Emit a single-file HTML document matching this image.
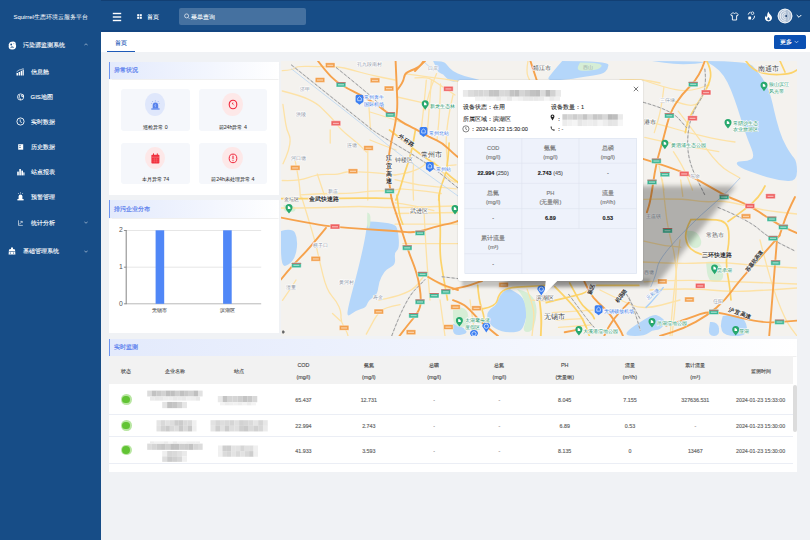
<!DOCTYPE html>
<html><head><meta charset="utf-8">
<style>
*{box-sizing:border-box;margin:0;padding:0}
html,body{width:810px;height:540px;overflow:hidden;background:#f0f2f5;font-family:"Liberation Sans",sans-serif;color:#333}
.abs{position:absolute}
div{-webkit-text-stroke-width:0.15px}
#side{position:absolute;left:0;top:0;width:101px;height:540px;background:#174d87}
#head{position:absolute;left:101px;top:0;width:709px;height:31.5px;background:#174d87}
.mi{position:absolute;color:#fff;font-size:5.9px;line-height:8px;white-space:nowrap;-webkit-text-stroke:0.12px #fff}
.ic{position:absolute}
#tabs{position:absolute;left:101px;top:31.5px;width:709px;height:20.5px;background:#fff}
.panel{position:absolute;background:#fff}
.ph{position:absolute;left:0;top:0;right:0;height:17.5px;background:linear-gradient(90deg,#e3eafc,#f3f6fe 60%,#ffffff);border-left:1.5px solid #6e95f2;box-shadow:0 0.5px 1px rgba(0,0,0,0.06)}
.ph span{position:absolute;left:4px;top:0;line-height:17.5px;font-size:5.5px;color:#5b80ee;white-space:nowrap;-webkit-text-stroke-width:0.2px}
.card{position:absolute;background:#f5f7fb;border-radius:3px}
.cl{position:absolute;left:0;right:0;text-align:center;font-size:5.3px;color:#333;white-space:nowrap;-webkit-text-stroke-width:0.05px}
.circ{position:absolute;width:22px;height:22px;border-radius:50%}
.th{position:absolute;width:60px;text-align:center;font-size:5.4px;line-height:8px;color:#484848;-webkit-text-stroke-width:0.12px;white-space:nowrap}
.td{position:absolute;width:60px;text-align:center;font-size:5.3px;line-height:8px;color:#666;white-space:nowrap}
</style></head>
<body>
<!-- sidebar -->
<div id="side">
  <div class="mi" style="left:13.5px;top:12.7px;-webkit-text-stroke-width:0.02px">Squirrel生态环境云服务平台</div>
  <div class="mi" style="left:23px;top:40.8px;">污染源监测系统</div>
  <div class="mi" style="left:31px;top:67.7px;">信息舱</div>
  <div class="mi" style="left:30.6px;top:92.7px;">GIS地图</div>
  <div class="mi" style="left:30.6px;top:117.7px;">实时数据</div>
  <div class="mi" style="left:30.6px;top:142.9px;">历史数据</div>
  <div class="mi" style="left:30.6px;top:167.5px;">站点报表</div>
  <div class="mi" style="left:30.6px;top:192.9px;">预警管理</div>
  <div class="mi" style="left:30.6px;top:218.8px;">统计分析</div>
  <div class="mi" style="left:23px;top:247.3px;">基础管理系统</div>
  <svg class="ic" style="left:7.5px;top:40.6px" width="9" height="9" viewBox="0 0 9 9"><path d="M1.2 2.6 Q1.6 0.6 3.8 0.8 Q5 0.2 6.4 0.8 Q8.2 1.6 7.8 3.6 Q8.6 5.2 7.8 6.8 Q7 8.6 4.6 8.4 Q2.2 8.6 1.2 7.4 Q0.3 6 0.8 4.4 Q0.4 3.4 1.2 2.6 Z" fill="#fff"/><ellipse cx="3.2" cy="3.4" rx="0.9" ry="1" fill="#174d87"/><path d="M2.6 6.6 Q3.8 5.2 5.6 6.4" fill="none" stroke="#174d87" stroke-width="1"/><circle cx="5.8" cy="2.6" r="0.55" fill="#8fa9cc"/></svg>
  <svg class="ic" style="left:84px;top:42.5px" width="4" height="3" viewBox="0 0 4 3"><path d="M0.3 2.4 L2 0.7 L3.7 2.4" fill="none" stroke="#fff" stroke-width="0.5"/></svg>
  <svg class="ic" style="left:16px;top:67.5px" width="8" height="8" viewBox="0 0 8 8"><rect x="0.5" y="5" width="1.5" height="2.5" fill="#fff"/><rect x="2.6" y="4" width="1.5" height="3.5" fill="#fff"/><rect x="4.7" y="2.8" width="1.5" height="4.7" fill="#fff"/><rect x="6.6" y="1.5" width="1.2" height="6" fill="#fff"/><path d="M0.5 4 L3 2 L5 1.6 L7.6 0.4" fill="none" stroke="#fff" stroke-width="0.6"/></svg>
  <svg class="ic" style="left:16.5px;top:92.8px" width="8" height="8" viewBox="0 0 8 8"><circle cx="3.6" cy="4" r="3.1" fill="none" stroke="#fff" stroke-width="0.8"/><path d="M2 1.8 Q3 2.6 2.4 3.6 Q1.6 4.2 2.6 5 Q3.6 5.6 3.4 7" fill="none" stroke="#fff" stroke-width="0.9"/><circle cx="5.6" cy="2.8" r="1.4" fill="#fff"/><circle cx="5.6" cy="2.8" r="0.5" fill="#174d87"/></svg>
  <svg class="ic" style="left:15.8px;top:117.2px" width="9" height="9" viewBox="0 0 9 9"><circle cx="4.5" cy="4.5" r="3.6" fill="none" stroke="#fff" stroke-width="0.9"/><path d="M4.2 2.4 L4.2 4.7 L5.8 5.6" fill="none" stroke="#fff" stroke-width="0.8"/></svg>
  <svg class="ic" style="left:17.5px;top:143.8px" width="6" height="6" viewBox="0 0 6 6"><rect x="0.2" y="0.2" width="5" height="5.5" fill="#fff"/><rect x="1.2" y="1.4" width="1.6" height="0.7" fill="#174d87"/><rect x="1.2" y="3.2" width="1.6" height="0.7" fill="#174d87"/></svg>
  <svg class="ic" style="left:16.8px;top:168px" width="8" height="8" viewBox="0 0 8 8"><rect x="0.2" y="3.6" width="1.6" height="3.8" fill="#fff"/><rect x="2.3" y="1" width="1.6" height="6.4" fill="#fff"/><rect x="4.4" y="2.6" width="1.6" height="4.8" fill="#fff"/><rect x="6.3" y="4.4" width="1.2" height="3" fill="#fff"/></svg>
  <svg class="ic" style="left:17px;top:192.4px" width="7" height="9" viewBox="0 0 7 9"><path d="M1.6 7 L1.6 4.6 Q1.6 2.6 3.5 2.6 Q5.4 2.6 5.4 4.6 L5.4 7 Z" fill="#fff"/><rect x="0.4" y="7" width="6.2" height="1.4" fill="#fff"/><path d="M3.5 0.3 L3.5 1.5 M1 1 L1.8 1.9 M6 1 L5.2 1.9" stroke="#fff" stroke-width="0.6"/></svg>
  <svg class="ic" style="left:18px;top:220.3px" width="5" height="6" viewBox="0 0 5 6"><path d="M0.5 0.3 L0.5 5.4 L4.8 5.4" fill="none" stroke="#fff" stroke-width="0.6"/><path d="M1.2 4.4 L4.2 1.4 M2.4 1.4 L4.2 1.4 L4.2 3" fill="none" stroke="#fff" stroke-width="0.6"/></svg>
  <svg class="ic" style="left:84.2px;top:221.3px" width="4" height="3" viewBox="0 0 4 3"><path d="M0.3 0.6 L2 2.3 L3.7 0.6" fill="none" stroke="#fff" stroke-width="0.5"/></svg>
  <svg class="ic" style="left:7.7px;top:247.4px" width="8" height="8" viewBox="0 0 8 8"><path d="M3 0.5 L5 0.5 L5 2 L7 2.6 L7.4 7.5 L0.6 7.5 L1 2.6 L3 2 Z" fill="#fff"/><path d="M1.2 4.5 L6.8 4.5" stroke="#174d87" stroke-width="0.6"/><circle cx="2.4" cy="6" r="0.6" fill="#174d87"/><circle cx="5.6" cy="6" r="0.6" fill="#174d87"/></svg>
  <svg class="ic" style="left:84.2px;top:249.8px" width="4" height="3" viewBox="0 0 4 3"><path d="M0.3 0.6 L2 2.3 L3.7 0.6" fill="none" stroke="#fff" stroke-width="0.5"/></svg>
</div>
<!-- header -->
<div id="head">
  <div class="abs" style="left:0;top:0;width:709px;height:1px;background:#123f73"></div>
  <div class="abs" style="left:0;top:29.5px;width:709px;height:2px;background:#134581"></div>
  <svg class="abs" style="left:10.7px;top:11.5px" width="10" height="10" viewBox="0 0 10 10"><rect x="0.8" y="0.8" width="8.4" height="1.4" fill="#fff"/><rect x="0.8" y="4.3" width="8.4" height="1.4" fill="#fff"/><rect x="0.8" y="7.8" width="8.4" height="1.4" fill="#fff"/></svg>
  <svg class="abs" style="left:36.3px;top:14px" width="5" height="5" viewBox="0 0 5 5"><rect x="0.2" y="0.2" width="2" height="2" fill="#fff"/><rect x="2.8" y="0.2" width="2" height="2" fill="#fff"/><rect x="0.2" y="2.8" width="2" height="2" fill="#fff"/><rect x="2.8" y="2.8" width="2" height="2" fill="#fff"/></svg>
  <div class="mi" style="left:45.5px;top:12.5px;">首页</div>
  <div class="abs" style="left:78.3px;top:7.8px;width:126.8px;height:17px;background:#4571a0;border-radius:2px"></div>
  <svg class="abs" style="left:83.3px;top:13px" width="6" height="7" viewBox="0 0 6 7"><circle cx="2.6" cy="2.9" r="2" fill="none" stroke="#dfe6f0" stroke-width="0.8"/><line x1="4" y1="4.4" x2="5.4" y2="5.8" stroke="#dfe6f0" stroke-width="0.8"/></svg>
  <div class="mi" style="left:90px;top:12.5px;color:#d9e1ec;font-size:5.6px">菜单查询</div>
  <svg class="abs" style="left:629px;top:12px" width="9" height="9" viewBox="0 0 9 9"><path d="M2.6 1 L3.6 1 Q4.5 2 5.4 1 L6.4 1 L8.3 2.6 L7.2 4 L6.6 3.6 L6.6 8 L2.4 8 L2.4 3.6 L1.8 4 L0.7 2.6 Z" fill="none" stroke="#fff" stroke-width="0.9" stroke-linejoin="round"/></svg>
  <svg class="abs" style="left:645.5px;top:10.8px" width="9" height="10" viewBox="0 0 9 10"><circle cx="5.5" cy="2.2" r="1.3" fill="none" stroke="#fff" stroke-width="0.8"/><rect x="1.3" y="5.6" width="2.8" height="2.8" fill="#fff" rx="0.4"/><path d="M1.2 3.6 Q1.8 1.4 3.6 1.2" fill="none" stroke="#fff" stroke-width="0.9"/><path d="M7.6 4.8 Q7.6 7.8 5.4 8.6" fill="none" stroke="#fff" stroke-width="0.9"/></svg>
  <svg class="abs" style="left:662.5px;top:10.5px" width="9" height="11" viewBox="0 0 9 11"><path d="M4.3 0.5 Q5 2.6 6.9 4.2 Q8.5 5.8 7.9 8 Q7 10.4 4.5 10.5 Q1.8 10.4 1 8 Q0.5 6 2 4.4 Q2.3 6 3 6.4 Q2.8 3 4.3 0.5 Z M4.5 6 Q3.2 7.4 3.3 8.3 Q3.5 9.3 4.5 9.3 Q5.6 9.3 5.8 8.3 Q5.9 7.2 4.5 6 Z" fill="#fff" fill-rule="evenodd"/></svg>
  <svg class="abs" style="left:675.5px;top:8px" width="16" height="16" viewBox="0 0 16 16"><circle cx="8" cy="8" r="7.3" fill="#aebfd4"/><circle cx="8" cy="8" r="6.9" fill="none" stroke="#fff" stroke-width="0.9"/><path d="M8.6 2.6 Q3.2 3.2 3.2 8 Q3.2 12.8 8.6 13.4" fill="none" stroke="#fff" stroke-width="0.8"/><path d="M8.8 4.2 Q5 4.8 5 8 Q5 11.2 8.8 11.8" fill="none" stroke="#fff" stroke-width="0.7"/><path d="M9 5.8 Q6.8 6.2 6.8 8 Q6.8 9.8 9 10.2" fill="none" stroke="#fff" stroke-width="0.6"/><circle cx="9.2" cy="8" r="0.9" fill="#1e3f6e"/><path d="M11 3.5 Q13.4 8 11 12.5" fill="none" stroke="#e8eef6" stroke-width="0.5"/></svg>
  <svg class="abs" style="left:694.5px;top:13.6px" width="6" height="5" viewBox="0 0 6 5"><path d="M0.7 1 L3 3.3 L5.3 1" fill="none" stroke="#fff" stroke-width="1"/></svg>
</div>
<div id="tabs">
  <div class="abs" style="left:14.3px;top:7px;font-size:5.8px;line-height:8px;color:#1f5bb8">首页</div>
  <div class="abs" style="left:6px;top:19.2px;width:27.5px;height:1.2px;background:#1f5bb8"></div>
  <div class="abs" style="left:672.9px;top:3px;width:31.8px;height:14.4px;background:#0b50b3;border-radius:1.5px"></div>
  <div class="abs" style="left:679px;top:6.5px;font-size:5.6px;line-height:8px;color:#fff">更多</div>
  <svg class="abs" style="left:692.5px;top:8.5px" width="5" height="4" viewBox="0 0 5 4"><path d="M0.6 0.9 L2.5 2.8 L4.4 0.9" fill="none" stroke="#fff" stroke-width="0.6"/></svg>
</div>

<!-- panel 1 -->
<div class="panel" style="left:109.4px;top:61.5px;width:169.2px;height:133.5px">
  <div class="ph"><span>异常状况</span></div>
  <div class="card" style="left:11.6px;top:27.9px;width:69.2px;height:41.9px"></div>
  <div class="card" style="left:89.5px;top:27.9px;width:67.8px;height:41.9px"></div>
  <div class="card" style="left:11.6px;top:81.5px;width:69.2px;height:41.4px"></div>
  <div class="card" style="left:89.5px;top:81.5px;width:67.8px;height:41.4px"></div>
  <div class="circ" style="left:35.3px;top:31.7px;width:20.6px;height:22.6px;background:#dfe7fb"></div>
  <div class="circ" style="left:112.8px;top:31.7px;width:20.6px;height:22.6px;background:#fde8e8"></div>
  <div class="circ" style="left:35.3px;top:85px;width:20.6px;height:22.8px;background:#fde8e8"></div>
  <div class="circ" style="left:112.8px;top:85px;width:20.6px;height:22.8px;background:#fde8e8"></div>
  <svg class="abs" style="left:41.2px;top:38.5px" width="9" height="10" viewBox="0 0 9 10"><path d="M1.7 8.6 L1.7 5.6 Q1.7 2.6 4.4 2.6 Q7.2 2.6 7.2 5.6 L7.2 8.6 Z" fill="#5781ec"/><rect x="0.3" y="8.4" width="8.3" height="1.2" fill="#5781ec"/><path d="M4.4 0.2 L4.4 1.6 M1.2 1 L2 2.1 M7.6 1 L6.8 2.1 M0.2 3.4 L1.2 3.7 M8.6 3.4 L7.6 3.7" stroke="#7b9cf0" stroke-width="0.55"/><path d="M4.6 4 L3.7 5.8 L4.6 5.8 L4.2 7.4" fill="none" stroke="#c8d6fb" stroke-width="0.5"/></svg>
  <svg class="abs" style="left:118.8px;top:37.7px" width="10" height="11" viewBox="0 0 10 11"><ellipse cx="5" cy="5.5" rx="3.8" ry="4.3" fill="none" stroke="#f0283c" stroke-width="1.1"/><circle cx="4.6" cy="4.6" r="0.6" fill="#f0283c"/><path d="M5 3.2 L4.6 4.6 L6.2 6.4" fill="none" stroke="#f0283c" stroke-width="0.5"/></svg>
  <svg class="abs" style="left:41.6px;top:91px" width="9" height="11" viewBox="0 0 9 11"><rect x="0.4" y="1.8" width="8" height="8.8" rx="0.8" fill="#f0303e"/><rect x="2" y="0.4" width="1" height="2.4" fill="#f0303e"/><rect x="5.8" y="0.4" width="1" height="2.4" fill="#f0303e"/><path d="M1 4.2 L8 4.2" stroke="#fbb" stroke-width="0.4"/><path d="M1.5 6.2 L7.5 6.2 M1.5 8.2 L7.5 8.2 M3.4 5 L3.4 9.6 M5.4 5 L5.4 9.6" stroke="#f88" stroke-width="0.3"/></svg>
  <svg class="abs" style="left:118.6px;top:91px" width="10" height="11" viewBox="0 0 10 11"><ellipse cx="5" cy="5.4" rx="3.8" ry="4.3" fill="none" stroke="#f0283c" stroke-width="1.0"/><rect x="4.45" y="2.6" width="1.1" height="3.6" rx="0.4" fill="#f0283c"/><circle cx="5" cy="7.6" r="0.6" fill="#f0283c"/></svg>
  <div class="cl" style="left:11.6px;width:69.2px;top:61px;line-height:8px">巡检异常 0</div>
  <div class="cl" style="left:89.5px;width:67.8px;top:61px;line-height:8px">前24h异常 4</div>
  <div class="cl" style="left:11.6px;width:69.2px;top:113.8px;line-height:8px">本月异常 74</div>
  <div class="cl" style="left:89.5px;width:67.8px;top:113.8px;line-height:8px">前24h未处理异常 4</div>
</div>
<!-- panel 2 -->
<div class="panel" style="left:109.4px;top:199.8px;width:169.2px;height:133.4px">
  <div class="ph" style="height:18px"><span style="line-height:18px">排污企业分布</span></div>
  <svg class="abs" style="left:0;top:0" width="169" height="133" viewBox="0 0 169 133">
    <line x1="17.2" y1="30.5" x2="152.2" y2="30.5" stroke="#e3e3e3" stroke-width="0.9"/>
    <line x1="17.2" y1="67.2" x2="152.2" y2="67.2" stroke="#e3e3e3" stroke-width="0.9"/>
    <line x1="17.2" y1="103.8" x2="152.2" y2="103.8" stroke="#9a9a9a" stroke-width="0.7"/>
    <line x1="17.2" y1="30" x2="17.2" y2="104.2" stroke="#777" stroke-width="0.9"/>
    <path d="M14.9 30.5 L17.2 30.5 M14.9 67.2 L17.2 67.2 M14.9 103.8 L17.2 103.8" stroke="#777" stroke-width="0.8"/>
    <rect x="46.6" y="30.3" width="8.6" height="73.5" fill="#5087f7"/>
    <rect x="114.1" y="30.3" width="8.6" height="73.5" fill="#5087f7"/>
    <text x="12" y="32.3" font-size="6.8" fill="#555" text-anchor="middle" font-family="Liberation Sans">2</text>
    <text x="12" y="69.1" font-size="6.8" fill="#555" text-anchor="middle" font-family="Liberation Sans">1</text>
    <text x="12" y="105.8" font-size="6.8" fill="#555" text-anchor="middle" font-family="Liberation Sans">0</text>
    <text x="50.9" y="111.8" font-size="5.4" fill="#666" stroke="#666" stroke-width="0.1" text-anchor="middle" font-family="Liberation Sans">无锡市</text>
    <text x="118.4" y="111.8" font-size="5.4" fill="#666" stroke="#666" stroke-width="0.1" text-anchor="middle" font-family="Liberation Sans">滨湖区</text>
  </svg>
</div>
<!-- map -->
<div class="abs" id="map" style="left:281px;top:61px;width:516px;height:275px;overflow:hidden"><!--MAP-->
<svg class="abs" style="left:0;top:0" width="516" height="275" viewBox="281 61 516 275">
<rect x="281" y="61" width="516" height="275" fill="#f4f2ee"/>
<path d="M433.1 61.0 Q443.5 61.0 445.2 63.0 Q447.0 64.9 449.6 68.0 Q452.2 71.0 457.8 73.5 Q463.4 76.1 472.2 78.0 Q481.0 80.0 481.0 81.0 Q481.0 82.0 469.6 81.5 Q458.2 81.0 455.2 81.6 Q452.2 82.2 449.1 80.1 Q446.1 77.9 444.8 76.2 Q443.5 74.4 440.9 73.6 Q438.3 72.7 437.0 69.7 Q435.7 66.6 434.4 63.8 L433.1 61.0 Z" fill="#b4d6fa"/>
<path d="M562.2 61.0 Q608.9 61.0 608.5 65.0 Q608.1 69.1 605.2 71.7 Q602.2 74.3 593.3 75.4 Q584.4 76.5 577.0 78.0 Q569.6 79.5 557.8 80.2 Q545.9 81.0 548.9 76.9 Q551.9 72.8 557.0 66.9 L562.2 61.0 Z" fill="#b4d6fa"/>
<path d="M652.0 61.0 Q704.8 61.0 703.5 62.2 Q702.2 63.4 689.4 64.0 Q676.5 64.6 664.2 62.8 L652.0 61.0 Z" fill="#b4d6fa"/>
<path d="M704.8 61.0 Q747.8 61.0 752.5 65.8 Q757.3 70.6 762.1 77.8 Q766.9 84.9 769.3 92.1 Q771.7 99.2 774.0 110.0 Q776.4 120.7 779.4 130.2 Q782.4 139.8 786.6 147.0 Q790.8 154.2 793.9 157.8 Q797.0 161.3 797.0 171.4 Q797.0 181.6 787.9 181.0 Q778.8 180.4 770.5 178.1 Q762.1 175.7 750.2 171.5 Q738.2 167.3 737.0 164.3 Q735.8 161.3 741.8 161.3 Q747.8 161.3 751.4 159.2 Q755.0 157.0 751.4 148.4 Q747.8 139.8 745.4 132.7 Q743.0 125.5 740.0 116.0 Q737.0 106.4 734.0 98.1 Q731.1 89.7 727.5 82.5 Q723.9 75.3 719.1 70.5 Q714.3 65.8 709.5 63.4 L704.8 61.0 Z" fill="#b4d6fa"/>
<path d="M369.8 221.5 Q394.3 222.7 396.2 226.6 Q398.1 230.5 398.8 239.5 Q399.4 248.5 396.9 250.4 Q394.3 252.4 395.0 258.2 Q395.6 264.0 392.4 265.9 Q389.1 267.8 386.6 269.8 Q384.0 271.7 381.4 276.9 Q378.8 282.0 378.1 288.4 Q377.5 294.8 373.0 297.4 Q368.5 300.0 367.2 303.9 Q366.0 307.7 360.9 309.0 Q355.7 310.3 351.2 314.1 Q346.7 318.0 347.6 311.6 Q348.5 305.1 353.4 287.1 Q358.2 269.1 361.4 255.0 Q364.7 240.8 366.0 231.8 Q367.3 222.7 368.6 222.1 L369.8 221.5 Z" fill="#b4d6fa"/>
<path d="M281.0 231.0 Q292.6 227.9 295.1 233.1 Q297.7 238.2 296.9 247.2 Q296.0 256.2 292.4 260.7 Q288.7 265.2 284.9 265.9 Q281.0 266.5 281.0 248.8 L281.0 231.0 Z" fill="#b4d6fa"/>
<path d="M509.8 289.1 Q519.7 294.0 522.8 298.4 Q525.8 302.7 526.4 308.9 Q527.0 315.0 525.2 321.2 Q523.4 327.4 520.9 329.9 Q518.4 332.3 509.8 332.3 Q501.1 332.3 495.6 328.6 Q490.0 324.9 488.1 319.9 Q486.3 315.0 488.1 311.9 Q490.0 308.9 493.1 307.0 Q496.2 305.2 498.0 300.2 Q499.9 295.3 502.4 292.8 Q504.9 290.3 507.4 289.7 L509.8 289.1 Z" fill="#b4d6fa"/>
<path d="M453.0 323.7 Q462.0 326.0 465.5 329.8 Q469.0 333.6 461.0 334.8 Q453.0 336.0 453.0 329.9 L453.0 323.7 Z" fill="#b4d6fa"/>
<path d="M722.8 316.0 Q735.0 313.5 740.5 316.8 Q746.0 320.0 747.0 328.0 Q748.0 336.0 736.0 336.0 Q724.0 336.0 722.0 331.0 Q720.0 326.0 721.4 321.0 L722.8 316.0 Z" fill="#b4d6fa"/>
<path d="M710.0 322.0 Q718.0 321.0 719.0 328.5 Q720.0 336.0 714.0 336.0 Q708.0 336.0 709.0 329.0 L710.0 322.0 Z" fill="#b4d6fa"/>
<path d="M640.4 322.0 Q652.0 314.0 656.0 315.0 Q660.0 316.0 663.1 319.0 Q666.2 322.0 663.1 326.0 Q660.0 330.0 656.0 330.0 Q652.0 330.0 648.5 333.0 Q645.0 336.0 635.0 336.0 Q625.0 336.0 626.5 333.0 Q628.0 330.0 634.2 326.0 L640.4 322.0 Z" fill="#b4d6fa"/>
<path d="M424.5 62.3 L434 71" stroke="#b4d6fa" stroke-width="0.9"/>
<path d="M580.0 62.4 Q603.7 62.4 601.5 66.2 Q599.3 69.9 589.6 70.6 Q580.0 71.3 578.5 69.8 Q577.0 68.4 578.5 65.4 L580.0 62.4 Z" fill="#d6eed6"/>
<path d="M283.6 205.0 Q295.2 205.0 295.6 208.5 Q296.0 212.0 289.8 212.0 Q283.6 212.0 283.6 208.5 L283.6 205.0 Z" fill="#d6eed6"/>
<path d="M367.3 212.4 Q371.0 213.0 370.5 220.5 Q370.0 228.0 368.5 228.0 Q367.0 228.0 367.1 220.2 L367.3 212.4 Z" fill="#d6eed6"/>
<path d="M517.0 289.0 Q530.0 292.0 533.5 298.5 Q537.0 305.0 536.5 312.5 Q536.0 320.0 534.0 326.0 Q532.0 332.0 527.0 332.0 Q522.0 332.0 524.5 325.0 Q527.0 318.0 525.5 308.0 Q524.0 298.0 520.5 293.5 L517.0 289.0 Z" fill="#d6eed6"/>
<path d="M453.0 306.0 Q466.0 307.0 467.5 312.5 Q469.0 318.0 468.5 322.5 Q468.0 327.0 460.5 327.0 Q453.0 327.0 453.0 316.5 L453.0 306.0 Z" fill="#d6eed6"/>
<path d="M686.0 231.0 Q695.0 230.0 698.5 235.0 Q702.0 240.0 701.0 244.0 Q700.0 248.0 695.0 248.0 Q690.0 248.0 688.0 239.5 L686.0 231.0 Z" fill="#d6eed6"/>
<path d="M706.0 262.0 Q718.0 260.0 721.0 266.0 Q724.0 272.0 723.0 277.0 Q722.0 282.0 715.0 282.0 Q708.0 282.0 707.0 272.0 L706.0 262.0 Z" fill="#d6eed6"/>
<path d="M282.3 70.6 Q293.8 70.0 295.1 68.0 Q296.3 66.1 307.8 66.4 Q319.3 66.7 327.6 66.4 Q335.9 66.1 344.2 68.0 Q352.5 70.0 361.2 72.5 Q370.0 75.0 382.5 77.5 L395.0 80.0" fill="none" stroke="#fde2a6" stroke-width="1.3" stroke-linecap="round" stroke-linejoin="round"/>
<path d="M282.3 91.0 Q300.2 95.5 308.5 99.3 Q316.8 103.1 321.2 107.6 Q325.7 112.1 328.9 115.3 Q332.1 118.5 336.6 124.2 Q341.0 130.0 349.9 137.1 Q358.7 144.2 362.6 148.1 L366.5 152.0" fill="none" stroke="#fde2a6" stroke-width="1.3" stroke-linecap="round" stroke-linejoin="round"/>
<path d="M282.9 104.4 Q284.8 118.5 285.8 124.2 Q286.7 130.0 288.7 133.9 Q290.7 137.8 289.8 144.2 Q288.8 150.7 285.9 157.2 L283.0 163.7" fill="none" stroke="#fde2a6" stroke-width="1.3" stroke-linecap="round" stroke-linejoin="round"/>
<path d="M330.2 130.0 L330.2 143.0" fill="none" stroke="#fde2a6" stroke-width="1.3" stroke-linecap="round" stroke-linejoin="round"/>
<path d="M282.3 180.5 Q299.1 181.2 308.2 177.6 Q317.3 174.0 327.6 174.3 Q338.0 174.7 341.9 173.1 Q345.8 171.5 357.9 171.8 Q370.0 172.1 379.1 173.1 Q388.2 174.1 391.6 174.6 L395.0 175.0" fill="none" stroke="#fde2a6" stroke-width="1.3" stroke-linecap="round" stroke-linejoin="round"/>
<path d="M295.2 161.0 Q299.1 180.5 299.8 188.9 L300.4 197.4" fill="none" stroke="#fde2a6" stroke-width="1.3" stroke-linecap="round" stroke-linejoin="round"/>
<path d="M317.3 174.0 Q322.5 189.6 323.8 193.5 L325.0 197.4" fill="none" stroke="#fde2a6" stroke-width="1.3" stroke-linecap="round" stroke-linejoin="round"/>
<path d="M300.4 194.8 Q323.7 193.5 338.6 193.5 Q353.5 193.5 361.8 192.2 Q370.0 190.9 379.8 190.9 Q389.5 191.0 395.1 189.9 L400.6 188.9" fill="none" stroke="#fde2a6" stroke-width="1.3" stroke-linecap="round" stroke-linejoin="round"/>
<path d="M367.8 149.0 L367.8 200.0" fill="none" stroke="#fde2a6" stroke-width="1.3" stroke-linecap="round" stroke-linejoin="round"/>
<path d="M395.0 175.0 Q408.9 173.1 415.9 169.9 Q422.8 166.7 424.2 164.8 L425.6 163.0" fill="none" stroke="#fde2a6" stroke-width="1.3" stroke-linecap="round" stroke-linejoin="round"/>
<path d="M395.0 179.6 Q413.5 184.3 425.6 185.7 Q437.6 187.0 446.9 187.9 L456.1 188.9" fill="none" stroke="#fde2a6" stroke-width="1.3" stroke-linecap="round" stroke-linejoin="round"/>
<path d="M400.6 188.9 Q422.8 190.7 432.1 192.1 L441.3 193.5" fill="none" stroke="#fde2a6" stroke-width="1.3" stroke-linecap="round" stroke-linejoin="round"/>
<path d="M413.5 163.9 Q412.6 177.8 413.1 188.9 L413.5 200.0" fill="none" stroke="#fde2a6" stroke-width="1.3" stroke-linecap="round" stroke-linejoin="round"/>
<path d="M433.9 162.0 Q446.9 177.8 451.0 180.1 L455.2 182.4" fill="none" stroke="#fde2a6" stroke-width="1.3" stroke-linecap="round" stroke-linejoin="round"/>
<path d="M447.8 165.7 L456.1 164.8" fill="none" stroke="#fde2a6" stroke-width="1.3" stroke-linecap="round" stroke-linejoin="round"/>
<path d="M370.0 140.0 Q385.0 146.0 390.5 148.0 L396.0 150.0" fill="none" stroke="#fde2a6" stroke-width="1.3" stroke-linecap="round" stroke-linejoin="round"/>
<path d="M368.9 105.7 L370.5 130.0" fill="none" stroke="#fde2a6" stroke-width="1.3" stroke-linecap="round" stroke-linejoin="round"/>
<path d="M397.2 97.0 L422.4 102.6" fill="none" stroke="#fde2a6" stroke-width="1.3" stroke-linecap="round" stroke-linejoin="round"/>
<path d="M426.3 80.2 Q424.0 105.0 422.6 117.5 L421.2 130.0" fill="none" stroke="#fde2a6" stroke-width="1.3" stroke-linecap="round" stroke-linejoin="round"/>
<path d="M431.4 80.2 Q429.5 105.0 428.5 117.5 L427.5 130.0" fill="none" stroke="#fde2a6" stroke-width="1.3" stroke-linecap="round" stroke-linejoin="round"/>
<path d="M405.8 73.8 Q430.0 77.0 444.8 79.2 L459.5 81.5" fill="none" stroke="#fde2a6" stroke-width="1.3" stroke-linecap="round" stroke-linejoin="round"/>
<path d="M415.0 77.9 Q425.4 77.0 428.9 78.3 Q432.3 79.6 436.6 82.7 Q441.0 85.7 448.0 90.3 L455.0 95.0" fill="none" stroke="#fde2a6" stroke-width="1.3" stroke-linecap="round" stroke-linejoin="round"/>
<path d="M436.6 73.6 Q430.6 87.4 427.8 98.7 L425.0 110.0" fill="none" stroke="#fde2a6" stroke-width="1.3" stroke-linecap="round" stroke-linejoin="round"/>
<path d="M453.0 95.0 Q445.0 130.0 446.4 149.4 L447.8 168.9" fill="none" stroke="#fde2a6" stroke-width="1.3" stroke-linecap="round" stroke-linejoin="round"/>
<path d="M440.5 84.0 Q440.0 110.0 438.5 125.0 L437.0 140.0" fill="none" stroke="#fde2a6" stroke-width="1.3" stroke-linecap="round" stroke-linejoin="round"/>
<path d="M370.0 112.0 Q390.0 118.0 400.0 122.0 L410.0 126.0" fill="none" stroke="#fde2a6" stroke-width="1.3" stroke-linecap="round" stroke-linejoin="round"/>
<path d="M281.0 208.0 Q320.0 208.0 340.0 207.0 Q360.0 206.0 376.0 207.0 Q392.0 208.0 422.5 207.0 L453.0 206.0" fill="none" stroke="#fde2a6" stroke-width="1.3" stroke-linecap="round" stroke-linejoin="round"/>
<path d="M301.6 197.0 Q314.5 238.2 317.1 249.8 Q319.6 261.4 323.1 275.7 Q326.6 290.0 331.8 295.9 Q336.9 301.8 339.1 306.9 Q341.3 312.0 341.0 316.4 Q340.6 320.9 343.9 326.8 Q347.2 332.6 347.6 334.3 L348.0 336.0" fill="none" stroke="#fde2a6" stroke-width="1.3" stroke-linecap="round" stroke-linejoin="round"/>
<path d="M332.5 313.5 L340.6 320.9" fill="none" stroke="#fde2a6" stroke-width="1.3" stroke-linecap="round" stroke-linejoin="round"/>
<path d="M296.0 280.0 Q289.8 290.0 286.1 295.1 L282.5 300.3" fill="none" stroke="#fde2a6" stroke-width="1.3" stroke-linecap="round" stroke-linejoin="round"/>
<path d="M400.0 304.7 Q383.9 307.6 380.2 311.3 Q376.6 315.0 371.5 324.6 L366.3 334.1" fill="none" stroke="#fde2a6" stroke-width="1.3" stroke-linecap="round" stroke-linejoin="round"/>
<path d="M378.8 300.0 Q409.7 294.8 417.4 284.5 L425.2 274.2" fill="none" stroke="#fde2a6" stroke-width="1.3" stroke-linecap="round" stroke-linejoin="round"/>
<path d="M395.0 213.5 L459.2 212.5" fill="none" stroke="#fde2a6" stroke-width="1.3" stroke-linecap="round" stroke-linejoin="round"/>
<path d="M395.0 202.8 Q410.6 204.7 422.2 207.6 L433.9 210.6" fill="none" stroke="#fde2a6" stroke-width="1.3" stroke-linecap="round" stroke-linejoin="round"/>
<path d="M424.2 214.5 Q426.1 253.4 428.1 276.7 L430.0 300.0" fill="none" stroke="#fde2a6" stroke-width="1.3" stroke-linecap="round" stroke-linejoin="round"/>
<path d="M395.0 224.2 L459.2 224.2" fill="none" stroke="#fde2a6" stroke-width="1.3" stroke-linecap="round" stroke-linejoin="round"/>
<path d="M402.8 243.6 L459.2 243.6" fill="none" stroke="#fde2a6" stroke-width="1.3" stroke-linecap="round" stroke-linejoin="round"/>
<path d="M425.0 275.0 Q440.0 285.0 446.5 287.5 L453.0 290.0" fill="none" stroke="#fde2a6" stroke-width="1.3" stroke-linecap="round" stroke-linejoin="round"/>
<path d="M440.0 300.0 L445.0 336.0" fill="none" stroke="#fde2a6" stroke-width="1.3" stroke-linecap="round" stroke-linejoin="round"/>
<path d="M643.0 80.0 Q663.9 87.3 675.8 89.7 Q687.7 92.0 698.5 88.5 L709.2 84.9" fill="none" stroke="#fde2a6" stroke-width="1.3" stroke-linecap="round" stroke-linejoin="round"/>
<path d="M663.9 87.3 Q661.5 108.7 657.9 120.7 L654.3 132.6" fill="none" stroke="#fde2a6" stroke-width="1.3" stroke-linecap="round" stroke-linejoin="round"/>
<path d="M668.6 99.2 Q687.7 106.3 692.5 105.2 L697.3 104.0" fill="none" stroke="#fde2a6" stroke-width="1.3" stroke-linecap="round" stroke-linejoin="round"/>
<path d="M678.2 111.1 Q694.9 132.6 706.8 149.3 Q718.8 166.0 729.4 172.0 L740.0 178.0" fill="none" stroke="#fde2a6" stroke-width="1.3" stroke-linecap="round" stroke-linejoin="round"/>
<path d="M643.0 120.7 Q663.9 125.4 675.8 129.0 Q687.7 132.6 703.2 136.2 Q718.8 139.8 726.9 140.9 L735.0 142.0" fill="none" stroke="#fde2a6" stroke-width="1.3" stroke-linecap="round" stroke-linejoin="round"/>
<path d="M644.8 137.4 Q663.9 142.1 691.3 146.9 L718.8 151.7" fill="none" stroke="#fde2a6" stroke-width="1.3" stroke-linecap="round" stroke-linejoin="round"/>
<path d="M673.4 151.7 Q683.0 166.0 687.8 178.0 L692.5 190.0" fill="none" stroke="#fde2a6" stroke-width="1.3" stroke-linecap="round" stroke-linejoin="round"/>
<path d="M659.1 166.0 L663.9 190.0" fill="none" stroke="#fde2a6" stroke-width="1.3" stroke-linecap="round" stroke-linejoin="round"/>
<path d="M644.0 199.3 Q680.7 198.3 693.0 200.4 Q705.2 202.4 715.4 201.4 Q725.5 200.4 742.8 205.2 Q760.0 210.0 778.5 212.0 L797.0 214.0" fill="none" stroke="#fde2a6" stroke-width="1.3" stroke-linecap="round" stroke-linejoin="round"/>
<path d="M662.4 180.0 Q665.5 210.5 667.0 220.7 Q668.5 230.9 672.0 244.1 Q675.6 257.4 676.2 273.7 Q676.7 290.0 674.4 313.0 L672.0 336.0" fill="none" stroke="#fde2a6" stroke-width="1.3" stroke-linecap="round" stroke-linejoin="round"/>
<path d="M644.0 241.1 Q660.4 245.2 670.5 246.2 L680.7 247.2" fill="none" stroke="#fde2a6" stroke-width="1.3" stroke-linecap="round" stroke-linejoin="round"/>
<path d="M680.7 180.0 L682.8 196.3" fill="none" stroke="#fde2a6" stroke-width="1.3" stroke-linecap="round" stroke-linejoin="round"/>
<path d="M644.0 281.8 Q680.7 279.8 710.4 280.8 Q740.0 281.8 768.5 282.9 L797.0 284.0" fill="none" stroke="#fde2a6" stroke-width="1.3" stroke-linecap="round" stroke-linejoin="round"/>
<path d="M643.0 262.0 Q680.0 264.0 700.0 263.0 Q720.0 262.0 740.0 264.0 Q760.0 266.0 778.5 267.0 L797.0 268.0" fill="none" stroke="#fde2a6" stroke-width="1.3" stroke-linecap="round" stroke-linejoin="round"/>
<path d="M650.0 290.0 Q690.0 288.0 710.0 290.0 Q730.0 292.0 750.0 291.0 Q770.0 290.0 783.5 289.0 L797.0 288.0" fill="none" stroke="#fde2a6" stroke-width="1.3" stroke-linecap="round" stroke-linejoin="round"/>
<path d="M680.0 240.0 Q675.0 280.0 672.5 308.0 L670.0 336.0" fill="none" stroke="#fde2a6" stroke-width="1.3" stroke-linecap="round" stroke-linejoin="round"/>
<path d="M760.0 240.0 Q770.0 280.0 777.5 300.0 Q785.0 320.0 791.0 328.0 L797.0 336.0" fill="none" stroke="#fde2a6" stroke-width="1.3" stroke-linecap="round" stroke-linejoin="round"/>
<path d="M600.0 290.0 Q620.0 300.0 631.5 305.0 Q643.0 310.0 661.5 305.0 L680.0 300.0" fill="none" stroke="#fde2a6" stroke-width="1.3" stroke-linecap="round" stroke-linejoin="round"/>
<path d="M552.3 312.6 Q577.0 311.3 585.0 310.7 L593.1 310.1" fill="none" stroke="#fde2a6" stroke-width="1.3" stroke-linecap="round" stroke-linejoin="round"/>
<path d="M556.0 320.0 L583.2 318.7" fill="none" stroke="#fde2a6" stroke-width="1.3" stroke-linecap="round" stroke-linejoin="round"/>
<path d="M558.5 327.4 Q577.0 326.1 584.5 325.5 L591.9 324.9" fill="none" stroke="#fde2a6" stroke-width="1.3" stroke-linecap="round" stroke-linejoin="round"/>
<path d="M527.1 289.1 Q532.0 302.7 533.2 308.9 Q534.5 315.0 533.2 325.5 L532.0 336.0" fill="none" stroke="#fde2a6" stroke-width="1.3" stroke-linecap="round" stroke-linejoin="round"/>
<path d="M532.0 300.2 L553.0 301.5" fill="none" stroke="#fde2a6" stroke-width="1.3" stroke-linecap="round" stroke-linejoin="round"/>
<path d="M540.0 302.7 L541.2 336.0" fill="none" stroke="#fde2a6" stroke-width="1.3" stroke-linecap="round" stroke-linejoin="round"/>
<path d="M470.0 300.0 L475.0 336.0" fill="none" stroke="#fde2a6" stroke-width="1.3" stroke-linecap="round" stroke-linejoin="round"/>
<path d="M528.0 61.0 Q526.0 72.0 528.0 76.5 L530.0 81.0" fill="none" stroke="#fde2a6" stroke-width="1.3" stroke-linecap="round" stroke-linejoin="round"/>
<path d="M620.0 80.0 Q640.0 79.0 650.0 81.0 L660.0 83.0" fill="none" stroke="#fde2a6" stroke-width="1.3" stroke-linecap="round" stroke-linejoin="round"/>
<path d="M389.5 130.0 Q399.8 137.8 407.0 143.7 Q414.1 149.5 419.3 153.3 Q424.5 157.2 433.6 163.1 Q442.6 168.9 446.5 172.8 Q450.4 176.7 455.2 180.3 L460.0 184.0" fill="none" stroke="#fcd36a" stroke-width="1.7" stroke-linecap="round" stroke-linejoin="round"/>
<path d="M415.4 130.0 Q411.5 153.3 408.2 162.4 Q405.0 171.5 402.4 180.6 Q399.8 189.7 397.9 194.8 L395.9 200.0" fill="none" stroke="#fcd36a" stroke-width="1.7" stroke-linecap="round" stroke-linejoin="round"/>
<path d="M449.1 143.0 Q447.8 168.9 443.9 178.7 Q440.0 188.4 439.4 194.2 L438.7 200.0" fill="none" stroke="#fcd36a" stroke-width="1.7" stroke-linecap="round" stroke-linejoin="round"/>
<path d="M281.0 198.7 Q320.0 198.7 340.0 198.3 Q360.0 198.0 376.0 198.2 L392.0 198.5" fill="none" stroke="#fcd36a" stroke-width="1.7" stroke-linecap="round" stroke-linejoin="round"/>
<path d="M438.8 195.0 Q440.7 224.2 440.2 238.8 Q439.7 253.4 441.2 263.1 Q442.7 272.8 445.1 286.4 L447.5 300.0" fill="none" stroke="#fcd36a" stroke-width="1.7" stroke-linecap="round" stroke-linejoin="round"/>
<path d="M397.0 195.0 Q398.9 214.5 400.9 219.3 L402.8 224.2" fill="none" stroke="#fcd36a" stroke-width="1.7" stroke-linecap="round" stroke-linejoin="round"/>
<path d="M690.9 219.7 Q705.0 219.0 716.3 219.8 Q727.6 220.7 728.6 230.9 Q729.6 241.1 727.5 251.3 Q725.5 261.5 727.5 273.7 Q729.6 285.9 730.3 292.9 L731.0 300.0" fill="none" stroke="#fcd36a" stroke-width="1.7" stroke-linecap="round" stroke-linejoin="round"/>
<path d="M690.9 219.7 Q684.8 230.9 685.8 238.1 Q686.8 245.2 690.9 248.8 Q695.0 252.3 700.1 253.9 Q705.2 255.4 716.6 255.7 L728.0 256.0" fill="none" stroke="#fcd36a" stroke-width="1.7" stroke-linecap="round" stroke-linejoin="round"/>
<path d="M728.0 221.5 Q746.0 208.6 752.5 202.8 Q758.9 197.0 762.0 191.5 L765.0 186.0" fill="none" stroke="#fcd36a" stroke-width="1.7" stroke-linecap="round" stroke-linejoin="round"/>
<path d="M539.4 300.2 Q541.9 315.0 541.3 325.5 L540.7 336.0" fill="none" stroke="#fcd36a" stroke-width="1.7" stroke-linecap="round" stroke-linejoin="round"/>
<path d="M569.6 282.9 Q577.0 296.5 579.5 300.9 Q582.0 305.2 587.0 309.5 Q591.9 313.8 593.1 316.2 L594.3 318.7" fill="none" stroke="#fcd36a" stroke-width="1.7" stroke-linecap="round" stroke-linejoin="round"/>
<path d="M546.2 302.7 Q564.7 297.8 574.0 295.9 Q583.2 294.0 587.5 290.9 L591.9 287.9" fill="none" stroke="#fcd36a" stroke-width="1.7" stroke-linecap="round" stroke-linejoin="round"/>
<path d="M554.8 286.6 Q570.9 302.7 577.0 310.7 Q583.2 318.7 586.3 327.4 L589.4 336.0" fill="none" stroke="#fcd36a" stroke-width="1.7" stroke-linecap="round" stroke-linejoin="round"/>
<path d="M477.7 285.4 Q478.9 300.2 481.4 307.6 Q483.9 315.0 484.5 321.2 L485.1 327.4" fill="none" stroke="#fcd36a" stroke-width="1.7" stroke-linecap="round" stroke-linejoin="round"/>
<path d="M482.6 308.9 Q496.2 306.4 497.4 300.2 Q498.7 294.0 503.0 290.9 Q507.3 287.9 517.2 287.2 Q527.1 286.6 536.4 286.0 L545.6 285.4" fill="none" stroke="#fcd36a" stroke-width="1.7" stroke-linecap="round" stroke-linejoin="round"/>
<path d="M596.8 285.4 L638.8 285.4" fill="none" stroke="#fcd36a" stroke-width="1.7" stroke-linecap="round" stroke-linejoin="round"/>
<path d="M746.0 61.0 Q752.0 70.0 761.0 72.5 Q770.0 75.0 780.0 74.5 Q790.0 74.0 793.5 72.0 L797.0 70.0" fill="none" stroke="#fcd36a" stroke-width="1.7" stroke-linecap="round" stroke-linejoin="round"/>
<path d="M706.8 61.0 Q711.6 70.5 710.4 77.7 Q709.2 84.9 703.2 94.5 Q697.3 104.0 692.5 112.3 Q687.7 120.7 686.5 126.7 L685.3 132.6" fill="none" stroke="#fcd36a" stroke-width="1.7" stroke-linecap="round" stroke-linejoin="round"/>
<path d="M780.0 61.0 L785.0 72.0" fill="none" stroke="#fcd36a" stroke-width="1.7" stroke-linecap="round" stroke-linejoin="round"/>
<path d="M291.2 68.7 Q369.1 129.3 379.3 138.1 Q389.5 146.9 405.7 158.6 Q421.9 170.2 440.9 183.8 L460.0 197.4" fill="none" stroke="#b9d5f3" stroke-width="0.8"/>
<path d="M740.0 178.0 Q729.6 190.2 715.4 202.4 Q701.1 214.6 687.9 227.8 Q674.6 241.1 666.5 251.3 Q658.3 261.5 657.3 267.6 Q656.3 273.7 653.5 280.4 L650.7 287.1" fill="none" stroke="#9fc0e8" stroke-width="0.7"/>
<path d="M663.6 287.1 Q655.0 298.0 650.3 302.9 L645.6 307.7" fill="none" stroke="#a9cff7" stroke-width="1.4"/>
<path d="M291.2 64.8 Q369.1 127.4 373.5 130.7 Q377.8 133.9 395.3 144.2 Q412.8 154.6 423.9 161.8 Q434.9 168.9 447.4 179.3 L460.0 189.7" fill="none" stroke="#d8d8d8" stroke-width="1.1"/>
<path d="M291.2 64.8 Q369.1 127.4 373.5 130.7 Q377.8 133.9 395.3 144.2 Q412.8 154.6 423.9 161.8 Q434.9 168.9 447.4 179.3 L460.0 189.7" fill="none" stroke="#8c8c8c" stroke-width="0.8" stroke-dasharray="3 2"/>
<path d="M336.0 67.4 Q369.1 94.2 376.6 101.4 L384.0 108.6" fill="none" stroke="#d8d8d8" stroke-width="1.1"/>
<path d="M336.0 67.4 Q369.1 94.2 376.6 101.4 L384.0 108.6" fill="none" stroke="#8c8c8c" stroke-width="0.8" stroke-dasharray="3 2"/>
<path d="M704.8 68.7 Q707.4 89.3 699.7 100.9 Q692.0 112.5 689.4 125.3 Q686.8 138.2 688.1 151.1 Q689.4 164.0 697.1 179.4 L704.8 194.9" fill="none" stroke="#d8d8d8" stroke-width="1.1"/>
<path d="M704.8 68.7 Q707.4 89.3 699.7 100.9 Q692.0 112.5 689.4 125.3 Q686.8 138.2 688.1 151.1 Q689.4 164.0 697.1 179.4 L704.8 194.9" fill="none" stroke="#8c8c8c" stroke-width="0.8" stroke-dasharray="3 2"/>
<path d="M643.0 102.2 Q671.3 110.0 679.0 119.0 L686.8 128.0" fill="none" stroke="#d8d8d8" stroke-width="1.1"/>
<path d="M643.0 102.2 Q671.3 110.0 679.0 119.0 L686.8 128.0" fill="none" stroke="#8c8c8c" stroke-width="0.8" stroke-dasharray="3 2"/>
<path d="M717.7 207.3 Q748.6 220.2 758.9 229.2 Q769.2 238.2 782.1 244.6 L795.0 251.0" fill="none" stroke="#d8d8d8" stroke-width="1.1"/>
<path d="M717.7 207.3 Q748.6 220.2 758.9 229.2 Q769.2 238.2 782.1 244.6 L795.0 251.0" fill="none" stroke="#8c8c8c" stroke-width="0.8" stroke-dasharray="3 2"/>
<path d="M628.9 297.4 Q635.3 312.9 637.8 321.9 L640.4 330.9" fill="none" stroke="#d8d8d8" stroke-width="1.1"/>
<path d="M628.9 297.4 Q635.3 312.9 637.8 321.9 L640.4 330.9" fill="none" stroke="#8c8c8c" stroke-width="0.8" stroke-dasharray="3 2"/>
<path d="M568.4 294.0 Q589.4 322.4 591.8 324.9 L594.3 327.4" fill="none" stroke="#d8d8d8" stroke-width="1.1"/>
<path d="M568.4 294.0 Q589.4 322.4 591.8 324.9 L594.3 327.4" fill="none" stroke="#8c8c8c" stroke-width="0.8" stroke-dasharray="3 2"/>
<path d="M626.4 294.0 L640.0 318.7" fill="none" stroke="#d8d8d8" stroke-width="1.1"/>
<path d="M626.4 294.0 L640.0 318.7" fill="none" stroke="#8c8c8c" stroke-width="0.8" stroke-dasharray="3 2"/>
<path d="M391.7 336.0 Q405.0 300.0 415.1 289.7 L425.2 279.4" fill="none" stroke="#d8d8d8" stroke-width="1.1"/>
<path d="M391.7 336.0 Q405.0 300.0 415.1 289.7 L425.2 279.4" fill="none" stroke="#8c8c8c" stroke-width="0.8" stroke-dasharray="3 2"/>
<path d="M441.7 276.7 L459.2 278.7" fill="none" stroke="#d8d8d8" stroke-width="1.1"/>
<path d="M441.7 276.7 L459.2 278.7" fill="none" stroke="#8c8c8c" stroke-width="0.8" stroke-dasharray="3 2"/>
<path d="M318.0 61.0 Q325.7 71.2 330.8 76.3 Q335.9 81.4 341.6 85.0 Q347.4 88.5 353.8 91.7 Q360.2 94.8 368.9 99.9 Q377.7 105.1 382.1 108.7 Q386.6 112.2 391.8 115.3 Q396.9 118.5 400.7 121.1 Q404.5 123.7 409.6 126.2 Q414.8 128.8 422.9 133.3 Q431.0 137.8 436.8 140.4 Q442.6 143.0 447.8 148.2 Q453.0 153.3 456.5 155.9 L460.0 158.5" fill="none" stroke="#f6a24c" stroke-width="1.9" stroke-linecap="round" stroke-linejoin="round"/>
<path d="M395.6 61.0 Q396.9 90.4 397.2 98.1 Q397.5 105.8 396.9 112.2 Q396.2 118.5 395.1 124.2 Q394.0 130.0 391.8 139.8 Q389.5 149.5 388.5 159.2 Q387.5 168.9 388.8 178.7 Q390.1 188.4 390.8 194.2 Q391.4 200.0 395.4 211.3 Q399.4 222.7 403.3 235.6 Q407.2 248.5 412.4 261.4 Q417.5 274.2 419.4 285.8 Q421.3 297.4 420.6 303.9 Q420.0 310.3 413.6 318.0 Q407.2 325.7 403.3 330.9 L399.4 336.0" fill="none" stroke="#f6a24c" stroke-width="1.9" stroke-linecap="round" stroke-linejoin="round"/>
<path d="M396.9 90.4 Q403.2 82.7 403.9 78.2 Q404.5 73.8 407.7 72.2 Q410.9 70.6 414.8 69.0 Q418.6 67.4 421.8 64.2 L425.0 61.0" fill="none" stroke="#f6a24c" stroke-width="1.9" stroke-linecap="round" stroke-linejoin="round"/>
<path d="M415.0 71.0 Q420.0 66.0 421.8 63.5 L423.6 61.0" fill="none" stroke="#f6a24c" stroke-width="1.9" stroke-linecap="round" stroke-linejoin="round"/>
<path d="M281.0 217.6 Q306.7 222.7 318.4 224.6 Q330.0 226.6 348.0 227.9 Q366.0 229.2 382.7 230.2 Q399.4 231.2 407.1 232.1 Q414.9 233.0 425.2 229.8 Q435.5 226.6 444.2 224.6 Q453.0 222.7 455.5 221.8 L458.0 221.0" fill="none" stroke="#f6a24c" stroke-width="1.9" stroke-linecap="round" stroke-linejoin="round"/>
<path d="M326.0 227.9 Q309.3 248.5 301.6 256.2 Q293.9 264.0 287.4 271.7 L281.0 279.4" fill="none" stroke="#f6a24c" stroke-width="1.9" stroke-linecap="round" stroke-linejoin="round"/>
<path d="M427.8 276.8 Q440.6 284.5 449.3 287.2 L458.0 290.0" fill="none" stroke="#f6a24c" stroke-width="1.9" stroke-linecap="round" stroke-linejoin="round"/>
<path d="M453.0 289.1 Q465.3 286.6 470.9 284.8 Q476.5 282.9 479.2 281.9 L482.0 281.0" fill="none" stroke="#f6a24c" stroke-width="1.9" stroke-linecap="round" stroke-linejoin="round"/>
<path d="M453.0 300.2 Q462.9 303.9 466.6 307.0 Q470.3 310.1 474.0 314.4 Q477.7 318.7 482.6 323.0 Q487.6 327.4 491.3 330.5 Q495.0 333.6 496.5 334.8 L498.0 336.0" fill="none" stroke="#f6a24c" stroke-width="1.9" stroke-linecap="round" stroke-linejoin="round"/>
<path d="M584.4 281.7 Q589.4 292.8 593.7 297.8 Q598.0 302.7 602.4 306.4 Q606.7 310.1 610.4 315.1 Q614.1 320.0 617.8 326.1 Q621.5 332.3 622.2 334.1 L623.0 336.0" fill="none" stroke="#f6a24c" stroke-width="1.9" stroke-linecap="round" stroke-linejoin="round"/>
<path d="M628.9 302.7 Q616.5 315.0 611.6 322.4 Q606.7 329.9 605.5 332.9 L604.2 336.0" fill="none" stroke="#f6a24c" stroke-width="1.9" stroke-linecap="round" stroke-linejoin="round"/>
<path d="M564.7 332.3 L577.0 329.9" fill="none" stroke="#f6a24c" stroke-width="1.9" stroke-linecap="round" stroke-linejoin="round"/>
<path d="M704.8 61.0 Q699.7 76.4 690.7 85.5 Q681.6 94.5 675.8 103.5 Q670.0 112.5 666.8 125.3 Q663.6 138.2 659.8 151.1 Q655.9 164.0 653.3 182.0 Q650.7 200.0 648.8 206.2 L646.9 212.4" fill="none" stroke="#f6a24c" stroke-width="1.9" stroke-linecap="round" stroke-linejoin="round"/>
<path d="M643.0 158.8 Q676.5 169.1 686.8 174.2 Q697.1 179.4 706.1 184.6 Q715.1 189.7 721.5 193.3 Q728.0 197.0 738.3 200.8 Q748.6 204.7 758.9 211.8 Q769.2 218.9 776.9 223.4 Q784.6 227.9 790.8 230.4 L797.0 233.0" fill="none" stroke="#f6a24c" stroke-width="1.9" stroke-linecap="round" stroke-linejoin="round"/>
<path d="M779.5 235.6 Q761.5 256.2 749.9 269.1 Q738.3 282.0 731.8 291.0 Q725.4 300.0 716.4 307.7 Q707.4 315.4 695.8 321.9 Q684.2 328.3 672.1 332.1 L660.0 336.0" fill="none" stroke="#f6a24c" stroke-width="1.9" stroke-linecap="round" stroke-linejoin="round"/>
<path d="M666.2 325.7 Q690.0 318.0 700.0 314.1 Q710.0 310.3 725.5 314.1 Q740.9 318.0 753.8 320.6 Q766.6 323.2 781.8 321.9 L797.0 320.6" fill="none" stroke="#f6a24c" stroke-width="1.9" stroke-linecap="round" stroke-linejoin="round"/>
<path d="M776.9 240.8 Q774.3 274.2 773.0 289.6 Q771.8 305.1 770.5 320.6 L769.2 336.0" fill="none" stroke="#f6a24c" stroke-width="1.9" stroke-linecap="round" stroke-linejoin="round"/>
<path d="M795.0 197.0 Q787.2 212.4 783.4 224.0 L779.5 235.6" fill="none" stroke="#f6a24c" stroke-width="1.9" stroke-linecap="round" stroke-linejoin="round"/>
<path d="M530.4 61.0 L537.0 81.0" fill="none" stroke="#f6a24c" stroke-width="1.9" stroke-linecap="round" stroke-linejoin="round"/>
<rect x="325.4" y="62.7" width="9.6" height="5" rx="0.6" fill="#f2a04e" stroke="#fff" stroke-width="0.45"/><rect x="327.2" y="64.7" width="6" height="1.3" fill="#ffffff" opacity="0.5"/>
<rect x="315.2" y="77.4" width="9.6" height="5" rx="0.6" fill="#f2a04e" stroke="#fff" stroke-width="0.45"/><rect x="317.0" y="79.4" width="6" height="1.3" fill="#ffffff" opacity="0.5"/>
<rect x="336.2" y="82.1" width="9.6" height="5" rx="0.6" fill="#3bb795" stroke="#fff" stroke-width="0.45"/><rect x="336.4" y="82.3" width="9.2" height="0.8" fill="#e06060"/><rect x="338.0" y="84.1" width="6" height="1.3" fill="#ffffff" opacity="0.5"/>
<rect x="370.2" y="77.8" width="9.6" height="5" rx="0.6" fill="#f2a04e" stroke="#fff" stroke-width="0.45"/><rect x="372.0" y="79.8" width="6" height="1.3" fill="#ffffff" opacity="0.5"/>
<rect x="384.2" y="86.0" width="9.6" height="5" rx="0.6" fill="#f2a04e" stroke="#fff" stroke-width="0.45"/><rect x="386.0" y="88.0" width="6" height="1.3" fill="#ffffff" opacity="0.5"/>
<rect x="331.1" y="120.8" width="9.6" height="5" rx="0.6" fill="#ee6262" stroke="#fff" stroke-width="0.45"/><rect x="332.9" y="122.8" width="6" height="1.3" fill="#ffffff" opacity="0.5"/>
<rect x="363.7" y="145.5" width="9.6" height="5" rx="0.6" fill="#f2a04e" stroke="#fff" stroke-width="0.45"/><rect x="365.5" y="147.5" width="6" height="1.3" fill="#ffffff" opacity="0.5"/>
<rect x="290.4" y="165.3" width="9.6" height="5" rx="0.6" fill="#f2a04e" stroke="#fff" stroke-width="0.45"/><rect x="292.2" y="167.3" width="6" height="1.3" fill="#ffffff" opacity="0.5"/>
<rect x="348.2" y="168.7" width="9.6" height="5" rx="0.6" fill="#f2a04e" stroke="#fff" stroke-width="0.45"/><rect x="350.0" y="170.7" width="6" height="1.3" fill="#ffffff" opacity="0.5"/>
<rect x="385.6" y="112.1" width="9.6" height="5" rx="0.6" fill="#3bb795" stroke="#fff" stroke-width="0.45"/><rect x="385.8" y="112.3" width="9.2" height="0.8" fill="#e06060"/><rect x="387.4" y="114.1" width="6" height="1.3" fill="#ffffff" opacity="0.5"/>
<rect x="384.7" y="188.5" width="9.6" height="5" rx="0.6" fill="#3bb795" stroke="#fff" stroke-width="0.45"/><rect x="384.9" y="188.7" width="9.2" height="0.8" fill="#e06060"/><rect x="386.5" y="190.5" width="6" height="1.3" fill="#ffffff" opacity="0.5"/>
<rect x="443.6" y="86.3" width="9.6" height="5" rx="0.6" fill="#ee6262" stroke="#fff" stroke-width="0.45"/><rect x="445.4" y="88.3" width="6" height="1.3" fill="#ffffff" opacity="0.5"/>
<rect x="330.2" y="224.1" width="9.6" height="5" rx="0.6" fill="#ee6262" stroke="#fff" stroke-width="0.45"/><rect x="332.0" y="226.1" width="6" height="1.3" fill="#ffffff" opacity="0.5"/>
<rect x="415.2" y="230.5" width="9.6" height="5" rx="0.6" fill="#3bb795" stroke="#fff" stroke-width="0.45"/><rect x="415.4" y="230.7" width="9.2" height="0.8" fill="#e06060"/><rect x="417.0" y="232.5" width="6" height="1.3" fill="#ffffff" opacity="0.5"/>
<rect x="402.4" y="245.2" width="9.6" height="5" rx="0.6" fill="#3bb795" stroke="#fff" stroke-width="0.45"/><rect x="402.6" y="245.4" width="9.2" height="0.8" fill="#e06060"/><rect x="404.2" y="247.2" width="6" height="1.3" fill="#ffffff" opacity="0.5"/>
<rect x="311.0" y="256.3" width="9.6" height="5" rx="0.6" fill="#f2a04e" stroke="#fff" stroke-width="0.45"/><rect x="312.8" y="258.3" width="6" height="1.3" fill="#ffffff" opacity="0.5"/>
<rect x="291.6" y="262.7" width="9.6" height="5" rx="0.6" fill="#3bb795" stroke="#fff" stroke-width="0.45"/><rect x="291.8" y="262.9" width="9.2" height="0.8" fill="#e06060"/><rect x="293.4" y="264.7" width="6" height="1.3" fill="#ffffff" opacity="0.5"/>
<rect x="417.8" y="271.7" width="9.6" height="5" rx="0.6" fill="#3bb795" stroke="#fff" stroke-width="0.45"/><rect x="418.0" y="271.9" width="9.2" height="0.8" fill="#e06060"/><rect x="419.6" y="273.7" width="6" height="1.3" fill="#ffffff" opacity="0.5"/>
<rect x="429.4" y="292.9" width="9.6" height="5" rx="0.6" fill="#3bb795" stroke="#fff" stroke-width="0.45"/><rect x="429.6" y="293.1" width="9.2" height="0.8" fill="#e06060"/><rect x="431.2" y="294.9" width="6" height="1.3" fill="#ffffff" opacity="0.5"/>
<rect x="415.2" y="299.3" width="9.6" height="5" rx="0.6" fill="#3bb795" stroke="#fff" stroke-width="0.45"/><rect x="415.4" y="299.5" width="9.2" height="0.8" fill="#e06060"/><rect x="417.0" y="301.3" width="6" height="1.3" fill="#ffffff" opacity="0.5"/>
<rect x="441.0" y="289.2" width="9.6" height="5" rx="0.6" fill="#3bb795" stroke="#fff" stroke-width="0.45"/><rect x="441.2" y="289.4" width="9.2" height="0.8" fill="#e06060"/><rect x="442.8" y="291.2" width="6" height="1.3" fill="#ffffff" opacity="0.5"/>
<rect x="408.8" y="312.9" width="9.6" height="5" rx="0.6" fill="#3bb795" stroke="#fff" stroke-width="0.45"/><rect x="409.0" y="313.1" width="9.2" height="0.8" fill="#e06060"/><rect x="410.6" y="314.9" width="6" height="1.3" fill="#ffffff" opacity="0.5"/>
<rect x="374.0" y="309.1" width="9.6" height="5" rx="0.6" fill="#f2a04e" stroke="#fff" stroke-width="0.45"/><rect x="375.8" y="311.1" width="6" height="1.3" fill="#ffffff" opacity="0.5"/>
<rect x="339.3" y="325.3" width="9.6" height="5" rx="0.6" fill="#f2a04e" stroke="#fff" stroke-width="0.45"/><rect x="341.1" y="327.3" width="6" height="1.3" fill="#ffffff" opacity="0.5"/>
<rect x="406.2" y="329.7" width="9.6" height="5" rx="0.6" fill="#f2a04e" stroke="#fff" stroke-width="0.45"/><rect x="408.0" y="331.7" width="6" height="1.3" fill="#ffffff" opacity="0.5"/>
<rect x="443.6" y="324.5" width="9.6" height="5" rx="0.6" fill="#f2a04e" stroke="#fff" stroke-width="0.45"/><rect x="445.4" y="326.5" width="6" height="1.3" fill="#ffffff" opacity="0.5"/>
<rect x="688.4" y="81.7" width="9.6" height="5" rx="0.6" fill="#3bb795" stroke="#fff" stroke-width="0.45"/><rect x="688.6" y="81.9" width="9.2" height="0.8" fill="#e06060"/><rect x="690.2" y="83.7" width="6" height="1.3" fill="#ffffff" opacity="0.5"/>
<rect x="701.3" y="89.9" width="9.6" height="5" rx="0.6" fill="#ee6262" stroke="#fff" stroke-width="0.45"/><rect x="703.1" y="91.9" width="6" height="1.3" fill="#ffffff" opacity="0.5"/>
<rect x="664.5" y="113.1" width="9.6" height="5" rx="0.6" fill="#3bb795" stroke="#fff" stroke-width="0.45"/><rect x="664.7" y="113.3" width="9.2" height="0.8" fill="#e06060"/><rect x="666.3" y="115.1" width="6" height="1.3" fill="#ffffff" opacity="0.5"/>
<rect x="687.7" y="115.7" width="9.6" height="5" rx="0.6" fill="#ee6262" stroke="#fff" stroke-width="0.45"/><rect x="689.5" y="117.7" width="6" height="1.3" fill="#ffffff" opacity="0.5"/>
<rect x="651.6" y="158.4" width="9.6" height="5" rx="0.6" fill="#3bb795" stroke="#fff" stroke-width="0.45"/><rect x="651.8" y="158.6" width="9.2" height="0.8" fill="#e06060"/><rect x="653.4" y="160.4" width="6" height="1.3" fill="#ffffff" opacity="0.5"/>
<rect x="660.1" y="171.8" width="9.6" height="5" rx="0.6" fill="#3bb795" stroke="#fff" stroke-width="0.45"/><rect x="660.3" y="172.0" width="9.2" height="0.8" fill="#e06060"/><rect x="661.9" y="173.8" width="6" height="1.3" fill="#ffffff" opacity="0.5"/>
<rect x="679.4" y="171.3" width="9.6" height="5" rx="0.6" fill="#ee6262" stroke="#fff" stroke-width="0.45"/><rect x="681.2" y="173.3" width="6" height="1.3" fill="#ffffff" opacity="0.5"/>
<rect x="647.2" y="179.5" width="9.6" height="5" rx="0.6" fill="#3bb795" stroke="#fff" stroke-width="0.45"/><rect x="647.4" y="179.7" width="9.2" height="0.8" fill="#e06060"/><rect x="649.0" y="181.5" width="6" height="1.3" fill="#ffffff" opacity="0.5"/>
<rect x="719.3" y="194.5" width="9.6" height="5" rx="0.6" fill="#3bb795" stroke="#fff" stroke-width="0.45"/><rect x="719.5" y="194.7" width="9.2" height="0.8" fill="#e06060"/><rect x="721.1" y="196.5" width="6" height="1.3" fill="#ffffff" opacity="0.5"/>
<rect x="765.7" y="193.7" width="9.6" height="5" rx="0.6" fill="#ee6262" stroke="#fff" stroke-width="0.45"/><rect x="767.5" y="195.7" width="6" height="1.3" fill="#ffffff" opacity="0.5"/>
<rect x="745.1" y="203.5" width="9.6" height="5" rx="0.6" fill="#ee6262" stroke="#fff" stroke-width="0.45"/><rect x="746.9" y="205.5" width="6" height="1.3" fill="#ffffff" opacity="0.5"/>
<rect x="741.2" y="213.8" width="9.6" height="5" rx="0.6" fill="#f2a04e" stroke="#fff" stroke-width="0.45"/><rect x="743.0" y="215.8" width="6" height="1.3" fill="#ffffff" opacity="0.5"/>
<rect x="767.0" y="216.4" width="9.6" height="5" rx="0.6" fill="#3bb795" stroke="#fff" stroke-width="0.45"/><rect x="767.2" y="216.6" width="9.2" height="0.8" fill="#e06060"/><rect x="768.8" y="218.4" width="6" height="1.3" fill="#ffffff" opacity="0.5"/>
<rect x="778.5" y="224.6" width="9.6" height="5" rx="0.6" fill="#3bb795" stroke="#fff" stroke-width="0.45"/><rect x="778.7" y="224.8" width="9.2" height="0.8" fill="#e06060"/><rect x="780.3" y="226.6" width="6" height="1.3" fill="#ffffff" opacity="0.5"/>
<rect x="768.2" y="235.7" width="9.6" height="5" rx="0.6" fill="#3bb795" stroke="#fff" stroke-width="0.45"/><rect x="768.4" y="235.9" width="9.2" height="0.8" fill="#e06060"/><rect x="770.0" y="237.7" width="6" height="1.3" fill="#ffffff" opacity="0.5"/>
<rect x="770.8" y="260.2" width="9.6" height="5" rx="0.6" fill="#3bb795" stroke="#fff" stroke-width="0.45"/><rect x="771.0" y="260.4" width="9.2" height="0.8" fill="#e06060"/><rect x="772.6" y="262.2" width="6" height="1.3" fill="#ffffff" opacity="0.5"/>
<rect x="662.7" y="228.0" width="9.6" height="5" rx="0.6" fill="#3bb795" stroke="#fff" stroke-width="0.45"/><rect x="662.9" y="228.2" width="9.2" height="0.8" fill="#e06060"/><rect x="664.5" y="230.0" width="6" height="1.3" fill="#ffffff" opacity="0.5"/>
<rect x="657.5" y="278.9" width="9.6" height="5" rx="0.6" fill="#f2a04e" stroke="#fff" stroke-width="0.45"/><rect x="659.3" y="280.9" width="6" height="1.3" fill="#ffffff" opacity="0.5"/>
<rect x="695.4" y="283.3" width="9.6" height="5" rx="0.6" fill="#ee6262" stroke="#fff" stroke-width="0.45"/><rect x="697.2" y="285.3" width="6" height="1.3" fill="#ffffff" opacity="0.5"/>
<rect x="684.6" y="297.0" width="9.6" height="5" rx="0.6" fill="#f2a04e" stroke="#fff" stroke-width="0.45"/><rect x="686.4" y="299.0" width="6" height="1.3" fill="#ffffff" opacity="0.5"/>
<rect x="709.0" y="309.6" width="9.6" height="5" rx="0.6" fill="#3bb795" stroke="#fff" stroke-width="0.45"/><rect x="709.2" y="309.8" width="9.2" height="0.8" fill="#e06060"/><rect x="710.8" y="311.6" width="6" height="1.3" fill="#ffffff" opacity="0.5"/>
<rect x="774.7" y="319.4" width="9.6" height="5" rx="0.6" fill="#3bb795" stroke="#fff" stroke-width="0.45"/><rect x="774.9" y="319.6" width="9.2" height="0.8" fill="#e06060"/><rect x="776.5" y="321.4" width="6" height="1.3" fill="#ffffff" opacity="0.5"/>
<rect x="498.8" y="282.3" width="9.6" height="5" rx="0.6" fill="#f2a04e" stroke="#fff" stroke-width="0.45"/><rect x="500.6" y="284.3" width="6" height="1.3" fill="#ffffff" opacity="0.5"/>
<rect x="471.7" y="305.7" width="9.6" height="5" rx="0.6" fill="#f2a04e" stroke="#fff" stroke-width="0.45"/><rect x="473.5" y="307.7" width="6" height="1.3" fill="#ffffff" opacity="0.5"/>
<rect x="450.7" y="304.5" width="9.6" height="5" rx="0.6" fill="#f2a04e" stroke="#fff" stroke-width="0.45"/><rect x="452.5" y="306.5" width="6" height="1.3" fill="#ffffff" opacity="0.5"/>
<path d="M355.6 96.3 Q355.6 94.7 357.2 94.7 L361.8 94.7 Q363.4 94.7 363.4 96.3 L363.4 101.3 Q363.4 102.7 362.0 102.7 L359.5 104.7 L357.0 102.7 Q355.6 102.7 355.6 101.3 Z" fill="#3a7ef2"/><path d="M357.7 100.7 L357.7 98.1 L359.5 96.7 L361.3 98.1 L361.3 100.7 Z" fill="none" stroke="#fff" stroke-width="0.6"/>
<path d="M419.6 128.6 Q419.6 127.0 421.2 127.0 L425.8 127.0 Q427.4 127.0 427.4 128.6 L427.4 133.6 Q427.4 135.0 426.0 135.0 L423.5 137.0 L421.0 135.0 Q419.6 135.0 419.6 133.6 Z" fill="#3a7ef2"/><path d="M421.7 133.0 L421.7 130.4 L423.5 129.0 L425.3 130.4 L425.3 133.0 Z" fill="none" stroke="#fff" stroke-width="0.6"/>
<path d="M425.9 163.6 Q425.9 162.0 427.5 162.0 L432.1 162.0 Q433.7 162.0 433.7 163.6 L433.7 168.6 Q433.7 170.0 432.3 170.0 L429.8 172.0 L427.3 170.0 Q425.9 170.0 425.9 168.6 Z" fill="#3a7ef2"/><path d="M428.0 168.0 L428.0 165.4 L429.8 164.0 L431.6 165.4 L431.6 168.0 Z" fill="none" stroke="#fff" stroke-width="0.6"/>
<path d="M594.7 306.8 Q594.7 305.2 596.3 305.2 L600.9 305.2 Q602.5 305.2 602.5 306.8 L602.5 311.8 Q602.5 313.2 601.1 313.2 L598.6 315.2 L596.1 313.2 Q594.7 313.2 594.7 311.8 Z" fill="#3a7ef2"/><path d="M596.8 311.2 L596.8 308.6 L598.6 307.2 L600.4 308.6 L600.4 311.2 Z" fill="none" stroke="#fff" stroke-width="0.6"/>
<path d="M541.3 295.4 L538.4 291.0 Q537.3 289.4 537.3 289.2 Q537.3 285.4 541.3 285.4 Q545.3 285.4 545.3 289.2 Q545.3 289.4 544.2 291.0 Z" fill="#3a7ef2"/><circle cx="541.3" cy="289.2" r="2.1" fill="none" stroke="#fff" stroke-width="0.7"/>
<path d="M486.3 332.4 L483.4 328.0 Q482.3 326.4 482.3 326.2 Q482.3 322.4 486.3 322.4 Q490.3 322.4 490.3 326.2 Q490.3 326.4 489.2 328.0 Z" fill="#3a7ef2"/><circle cx="486.3" cy="326.2" r="2.1" fill="none" stroke="#fff" stroke-width="0.7"/>
<path d="M474.0 340.0 L471.1 335.6 Q470.0 334.0 470.0 333.8 Q470.0 330.0 474.0 330.0 Q478.0 330.0 478.0 333.8 Q478.0 334.0 476.9 335.6 Z" fill="#3a7ef2"/><circle cx="474.0" cy="333.8" r="2.1" fill="none" stroke="#fff" stroke-width="0.7"/>
<path d="M425.2 109.8 L422.8 106.6 Q421.7 105.2 421.7 103.7 Q421.7 100.2 425.2 100.2 Q428.7 100.2 428.7 103.7 Q428.7 105.2 427.6 106.6 Z" fill="#27a86d"/><path d="M424.0 105.2 L424.0 102.2 Q427.0 102.6 426.6 105.2 Z" fill="#fff"/>
<path d="M764.0 91.3 L761.6 88.1 Q760.5 86.7 760.5 85.2 Q760.5 81.7 764.0 81.7 Q767.5 81.7 767.5 85.2 Q767.5 86.7 766.4 88.1 Z" fill="#27a86d"/><path d="M762.8 86.7 L762.8 83.7 Q765.8 84.1 765.4 86.7 Z" fill="#fff"/>
<path d="M728.0 128.6 L725.6 125.4 Q724.5 124.0 724.5 122.5 Q724.5 119.0 728.0 119.0 Q731.5 119.0 731.5 122.5 Q731.5 124.0 730.4 125.4 Z" fill="#27a86d"/><path d="M726.8 124.0 L726.8 121.0 Q729.8 121.4 729.4 124.0 Z" fill="#fff"/>
<path d="M664.9 149.3 L662.5 146.1 Q661.4 144.7 661.4 143.2 Q661.4 139.7 664.9 139.7 Q668.4 139.7 668.4 143.2 Q668.4 144.7 667.3 146.1 Z" fill="#27a86d"/><path d="M663.7 144.7 L663.7 141.7 Q666.7 142.1 666.3 144.7 Z" fill="#fff"/>
<path d="M714.6 274.2 L712.2 271.0 Q711.1 269.6 711.1 268.1 Q711.1 264.6 714.6 264.6 Q718.1 264.6 718.1 268.1 Q718.1 269.6 717.0 271.0 Z" fill="#27a86d"/><path d="M713.4 269.6 L713.4 266.6 Q716.4 267.0 716.0 269.6 Z" fill="#fff"/>
<path d="M652.0 327.6 L649.6 324.4 Q648.5 323.0 648.5 321.5 Q648.5 318.0 652.0 318.0 Q655.5 318.0 655.5 321.5 Q655.5 323.0 654.4 324.4 Z" fill="#27a86d"/><path d="M650.8 323.0 L650.8 320.0 Q653.8 320.4 653.4 323.0 Z" fill="#fff"/>
<path d="M735.7 335.6 L733.3 332.4 Q732.2 331.0 732.2 329.5 Q732.2 326.0 735.7 326.0 Q739.2 326.0 739.2 329.5 Q739.2 331.0 738.1 332.4 Z" fill="#27a86d"/><path d="M734.5 331.0 L734.5 328.0 Q737.5 328.4 737.1 331.0 Z" fill="#fff"/>
<path d="M578.9 335.6 L576.5 332.4 Q575.4 331.0 575.4 329.5 Q575.4 326.0 578.9 326.0 Q582.4 326.0 582.4 329.5 Q582.4 331.0 581.3 332.4 Z" fill="#27a86d"/><path d="M577.7 331.0 L577.7 328.0 Q580.7 328.4 580.3 331.0 Z" fill="#fff"/>
<path d="M459.4 326.6 L457.0 323.4 Q455.9 322.0 455.9 320.5 Q455.9 317.0 459.4 317.0 Q462.9 317.0 462.9 320.5 Q462.9 322.0 461.8 323.4 Z" fill="#27a86d"/><path d="M458.2 322.0 L458.2 319.0 Q461.2 319.4 460.8 322.0 Z" fill="#fff"/>
<path d="M455.0 214.6 L452.6 211.4 Q451.5 210.0 451.5 208.5 Q451.5 205.0 455.0 205.0 Q458.5 205.0 458.5 208.5 Q458.5 210.0 457.4 211.4 Z" fill="#27a86d"/><path d="M453.8 210.0 L453.8 207.0 Q456.8 207.4 456.4 210.0 Z" fill="#fff"/>
<path d="M289.0 213.6 L286.6 210.4 Q285.5 209.0 285.5 207.5 Q285.5 204.0 289.0 204.0 Q292.5 204.0 292.5 207.5 Q292.5 209.0 291.4 210.4 Z" fill="#27a86d"/><path d="M287.8 209.0 L287.8 206.0 Q290.8 206.4 290.4 209.0 Z" fill="#fff"/>
<g font-family="Liberation Sans, sans-serif">
<text x="420.6" y="157.0" font-size="7.0" fill="#3a3a3a" font-weight="normal" text-anchor="start" stroke="#ffffff" stroke-width="1.1" paint-order="stroke" stroke-linejoin="round">常州市</text>
<text x="395.3" y="162.0" font-size="5.5" fill="#555" font-weight="normal" text-anchor="start" stroke="#ffffff" stroke-width="1.1" paint-order="stroke" stroke-linejoin="round">钟楼区</text>
<text x="397.5" y="137.5" font-size="5.6" fill="#333" font-weight="bold" text-anchor="start" stroke="#ffffff" stroke-width="1.1" paint-order="stroke" stroke-linejoin="round" transform="rotate(32 397.5 137.5)">外环路</text>
<text x="364.2" y="98.6" font-size="4.9" fill="#3b78e6" font-weight="normal" text-anchor="start" stroke="#ffffff" stroke-width="1.1" paint-order="stroke" stroke-linejoin="round">常州奔牛</text>
<text x="364.2" y="105.9" font-size="4.9" fill="#3b78e6" font-weight="normal" text-anchor="start" stroke="#ffffff" stroke-width="1.1" paint-order="stroke" stroke-linejoin="round">国际机场</text>
<text x="430.0" y="107.5" font-size="4.9" fill="#23966a" font-weight="normal" text-anchor="start" stroke="#ffffff" stroke-width="1.1" paint-order="stroke" stroke-linejoin="round">新龙生态林</text>
<text x="428.7" y="134.5" font-size="4.9" fill="#3b78e6" font-weight="normal" text-anchor="start" stroke="#ffffff" stroke-width="1.1" paint-order="stroke" stroke-linejoin="round">常州北站</text>
<text x="435.5" y="171.0" font-size="4.9" fill="#3b78e6" font-weight="normal" text-anchor="start" stroke="#ffffff" stroke-width="1.1" paint-order="stroke" stroke-linejoin="round">常州站</text>
<text x="357.0" y="65.8" font-size="4.8" fill="#8c93a3" font-weight="normal" text-anchor="start" stroke="#ffffff" stroke-width="1.1" paint-order="stroke" stroke-linejoin="round">孔九段南村</text>
<text x="299.5" y="91.0" font-size="5.2" fill="#8c93a3" font-weight="normal" text-anchor="start" stroke="#ffffff" stroke-width="1.1" paint-order="stroke" stroke-linejoin="round">济甲</text>
<text x="296.0" y="115.5" font-size="5.2" fill="#8c93a3" font-weight="normal" text-anchor="start" stroke="#ffffff" stroke-width="1.1" paint-order="stroke" stroke-linejoin="round">洪陵</text>
<text x="347.0" y="146.5" font-size="5.2" fill="#8c93a3" font-weight="normal" text-anchor="start" stroke="#ffffff" stroke-width="1.1" paint-order="stroke" stroke-linejoin="round">连塘</text>
<text x="290.5" y="160.0" font-size="5.0" fill="#8c93a3" font-weight="normal" text-anchor="start" stroke="#ffffff" stroke-width="1.1" paint-order="stroke" stroke-linejoin="round">河口塘</text>
<text x="327.5" y="192.5" font-size="5.0" fill="#8c93a3" font-weight="normal" text-anchor="start" stroke="#ffffff" stroke-width="1.1" paint-order="stroke" stroke-linejoin="round">新庄</text>
<text x="283.6" y="201.0" font-size="5.4" fill="#555" font-weight="normal" text-anchor="start" stroke="#ffffff" stroke-width="1.1" paint-order="stroke" stroke-linejoin="round">金坛区</text>
<text x="309.3" y="201.0" font-size="6.0" fill="#333" font-weight="bold" text-anchor="start" stroke="#ffffff" stroke-width="1.1" paint-order="stroke" stroke-linejoin="round">金武快速路</text>
<text x="409.7" y="213.2" font-size="5.6" fill="#555" font-weight="normal" text-anchor="start" stroke="#ffffff" stroke-width="1.1" paint-order="stroke" stroke-linejoin="round">武进区</text>
<text x="313.0" y="247.4" font-size="5.0" fill="#8c93a3" font-weight="normal" text-anchor="start" stroke="#ffffff" stroke-width="1.1" paint-order="stroke" stroke-linejoin="round">横子口</text>
<text x="339.0" y="284.2" font-size="5.0" fill="#8c93a3" font-weight="normal" text-anchor="start" stroke="#ffffff" stroke-width="1.1" paint-order="stroke" stroke-linejoin="round">黄河村</text>
<text x="286.0" y="289.2" font-size="5.0" fill="#8c93a3" font-weight="normal" text-anchor="start" stroke="#ffffff" stroke-width="1.1" paint-order="stroke" stroke-linejoin="round">湟里</text>
<text x="373.0" y="299.4" font-size="5.0" fill="#8c93a3" font-weight="normal" text-anchor="start" stroke="#ffffff" stroke-width="1.1" paint-order="stroke" stroke-linejoin="round">寿金</text>
<text x="428.0" y="70.4" font-size="5.0" fill="#8c93a3" font-weight="normal" text-anchor="start" stroke="#ffffff" stroke-width="1.1" paint-order="stroke" stroke-linejoin="round">口岸</text>
<text x="532.6" y="70.0" font-size="5.8" fill="#3a3a3a" font-weight="normal" text-anchor="start" stroke="#ffffff" stroke-width="1.1" paint-order="stroke" stroke-linejoin="round">靖江市</text>
<text x="582.5" y="68.8" font-size="4.6" fill="#9aa" font-weight="normal" text-anchor="start">西山</text>
<text x="757.6" y="70.8" font-size="7.0" fill="#3a3a3a" font-weight="normal" text-anchor="start" stroke="#ffffff" stroke-width="1.1" paint-order="stroke" stroke-linejoin="round">南通市</text>
<text x="769.0" y="86.4" font-size="4.9" fill="#23966a" font-weight="normal" text-anchor="start" stroke="#ffffff" stroke-width="1.1" paint-order="stroke" stroke-linejoin="round">狼山滨江</text>
<text x="769.0" y="92.6" font-size="4.9" fill="#23966a" font-weight="normal" text-anchor="start" stroke="#ffffff" stroke-width="1.1" paint-order="stroke" stroke-linejoin="round">风光带</text>
<text x="733.0" y="124.8" font-size="4.9" fill="#23966a" font-weight="normal" text-anchor="start" stroke="#ffffff" stroke-width="1.1" paint-order="stroke" stroke-linejoin="round">常阴沙生态</text>
<text x="733.0" y="131.0" font-size="4.9" fill="#23966a" font-weight="normal" text-anchor="start" stroke="#ffffff" stroke-width="1.1" paint-order="stroke" stroke-linejoin="round">农业旅游区</text>
<text x="670.5" y="146.6" font-size="5.0" fill="#23966a" font-weight="normal" text-anchor="start" stroke="#ffffff" stroke-width="1.1" paint-order="stroke" stroke-linejoin="round">黄泗浦生态公园</text>
<text x="660.0" y="101.6" font-size="5.0" fill="#8c93a3" font-weight="normal" text-anchor="start" stroke="#ffffff" stroke-width="1.1" paint-order="stroke" stroke-linejoin="round">三仟埭</text>
<text x="643.5" y="124.2" font-size="5.8" fill="#444" font-weight="normal" text-anchor="start" stroke="#ffffff" stroke-width="1.1" paint-order="stroke" stroke-linejoin="round">港市</text>
<text x="690.0" y="177.6" font-size="5.0" fill="#8c93a3" font-weight="normal" text-anchor="start" stroke="#ffffff" stroke-width="1.1" paint-order="stroke" stroke-linejoin="round">乐余</text>
<text x="706.1" y="237.0" font-size="5.8" fill="#555" font-weight="normal" text-anchor="start" stroke="#ffffff" stroke-width="1.1" paint-order="stroke" stroke-linejoin="round">常熟市</text>
<text x="702.2" y="257.2" font-size="5.8" fill="#333" font-weight="bold" text-anchor="start" stroke="#ffffff" stroke-width="1.1" paint-order="stroke" stroke-linejoin="round">三环快速路</text>
<text x="717.0" y="271.6" font-size="5.0" fill="#23966a" font-weight="normal" text-anchor="start" stroke="#ffffff" stroke-width="1.1" paint-order="stroke" stroke-linejoin="round">昆承湖</text>
<text x="748.0" y="272.0" font-size="5.2" fill="#333" font-weight="bold" text-anchor="start" stroke="#ffffff" stroke-width="1.1" paint-order="stroke" stroke-linejoin="round" transform="rotate(-52 748 272)">苏嘉杭高速</text>
<text x="728.5" y="310.5" font-size="5.6" fill="#333" font-weight="bold" text-anchor="start" stroke="#ffffff" stroke-width="1.1" paint-order="stroke" stroke-linejoin="round" transform="rotate(22 728.5 310.5)">沪宜高速</text>
<text x="657.0" y="325.0" font-size="5.0" fill="#23966a" font-weight="normal" text-anchor="start" stroke="#ffffff" stroke-width="1.1" paint-order="stroke" stroke-linejoin="round">尚湖湿地公园</text>
<text x="645.6" y="217.6" font-size="5.0" fill="#8c93a3" font-weight="normal" text-anchor="start" stroke="#ffffff" stroke-width="1.1" paint-order="stroke" stroke-linejoin="round">王庄镇</text>
<text x="644.0" y="273.8" font-size="5.0" fill="#8c93a3" font-weight="normal" text-anchor="start" stroke="#ffffff" stroke-width="1.1" paint-order="stroke" stroke-linejoin="round">西塘</text>
<text x="648.0" y="300.5" font-size="5.0" fill="#5b8fd8" font-weight="normal" text-anchor="start" stroke="#ffffff" stroke-width="1.1" paint-order="stroke" stroke-linejoin="round" transform="rotate(-40 648 300.5)">元和塘</text>
<text x="713.0" y="303.4" font-size="5.0" fill="#8c93a3" font-weight="normal" text-anchor="start" stroke="#ffffff" stroke-width="1.1" paint-order="stroke" stroke-linejoin="round">任阳</text>
<text x="739.0" y="333.2" font-size="5.0" fill="#23966a" font-weight="normal" text-anchor="start" stroke="#ffffff" stroke-width="1.1" paint-order="stroke" stroke-linejoin="round">屋湖</text>
<text x="535.7" y="299.8" font-size="5.6" fill="#444" font-weight="normal" text-anchor="start" stroke="#ffffff" stroke-width="1.1" paint-order="stroke" stroke-linejoin="round">滨湖区</text>
<text x="543.7" y="318.8" font-size="7.0" fill="#3a3a3a" font-weight="normal" text-anchor="start" stroke="#ffffff" stroke-width="1.1" paint-order="stroke" stroke-linejoin="round">无锡市</text>
<text x="604.2" y="312.6" font-size="4.9" fill="#3b78e6" font-weight="normal" text-anchor="start" stroke="#ffffff" stroke-width="1.1" paint-order="stroke" stroke-linejoin="round">无锡硕放机场</text>
<text x="583.2" y="332.8" font-size="5.0" fill="#23966a" font-weight="normal" text-anchor="start" stroke="#ffffff" stroke-width="1.1" paint-order="stroke" stroke-linejoin="round">大溪港湿地公园</text>
<text x="465.3" y="322.4" font-size="5.0" fill="#23966a" font-weight="normal" text-anchor="start" stroke="#ffffff" stroke-width="1.1" paint-order="stroke" stroke-linejoin="round">太湖鼋头渚</text>
<text x="465.3" y="328.6" font-size="5.0" fill="#23966a" font-weight="normal" text-anchor="start" stroke="#ffffff" stroke-width="1.1" paint-order="stroke" stroke-linejoin="round">度假区</text>
<text x="591.0" y="295.0" font-size="5.4" fill="#333" font-weight="bold" text-anchor="start" stroke="#ffffff" stroke-width="1.1" paint-order="stroke" stroke-linejoin="round" transform="rotate(-70 591 295)">新区</text>
<text x="618.0" y="303.0" font-size="5.4" fill="#333" font-weight="bold" text-anchor="start" stroke="#ffffff" stroke-width="1.1" paint-order="stroke" stroke-linejoin="round" transform="rotate(-55 618 303)">机场路</text>
<text x="385.5" y="160.0" font-size="5.6" fill="#333" font-weight="bold" text-anchor="start" stroke="#ffffff" stroke-width="1.1" paint-order="stroke" stroke-linejoin="round">江</text>
<text x="385.5" y="168.3" font-size="5.6" fill="#333" font-weight="bold" text-anchor="start" stroke="#ffffff" stroke-width="1.1" paint-order="stroke" stroke-linejoin="round">宜</text>
<text x="385.5" y="176.2" font-size="5.6" fill="#333" font-weight="bold" text-anchor="start" stroke="#ffffff" stroke-width="1.1" paint-order="stroke" stroke-linejoin="round">高</text>
<text x="385.5" y="183.4" font-size="5.6" fill="#333" font-weight="bold" text-anchor="start" stroke="#ffffff" stroke-width="1.1" paint-order="stroke" stroke-linejoin="round">速</text>
</g>
<path d="M283 330 L285 332 L283 334 L281.8 332 Z" fill="#666"/>
</svg>
<!--/MAP--></div>
<!--POPUP-->
<svg class="abs" style="left:440px;top:150px" width="320" height="160" viewBox="440 150 320 160"><defs><filter id="blr" x="-20%" y="-20%" width="140%" height="140%"><feGaussianBlur stdDeviation="2.6"/></filter></defs>
<path d="M590 186 L736 186 L657 284 L500 288 Z" fill="rgba(0,0,0,0.28)" filter="url(#blr)"/>
<filter id="blr2" x="-20%" y="-50%" width="140%" height="200%"><feGaussianBlur stdDeviation="1.6"/></filter><path d="M462 279 L650 279 L650 287 L462 287 Z" fill="rgba(0,0,0,0.2)" filter="url(#blr2)"/></svg>
<div class="abs" style="left:457.5px;top:80.4px;width:185.5px;height:200.5px;background:#fff;border-radius:2px;box-shadow:0 0 1.5px rgba(0,0,0,0.25)"></div>
<svg class="abs" style="left:540px;top:279px" width="22" height="16" viewBox="540 279 22 16"><path d="M545.9 279 L559.3 279 L544.4 293.9 Z" fill="#fff"/></svg>
<svg class="abs" style="left:632.5px;top:85.6px" width="6" height="6" viewBox="0 0 6 6"><path d="M0.8 0.8 L5.2 5.2 M5.2 0.8 L0.8 5.2" stroke="#444" stroke-width="0.7"/></svg>
<svg class="abs" style="left:0;top:0;pointer-events:none" width="810" height="540" viewBox="0 0 810 540">
<rect x="462.90" y="90.00" width="5.21" height="6.75" fill="rgb(233,233,233)"/>
<rect x="468.06" y="90.00" width="5.21" height="6.75" fill="rgb(220,220,220)"/>
<rect x="473.22" y="90.00" width="5.21" height="6.75" fill="rgb(214,214,214)"/>
<rect x="478.37" y="90.00" width="5.21" height="6.75" fill="rgb(213,213,213)"/>
<rect x="483.53" y="90.00" width="5.21" height="6.75" fill="rgb(217,217,217)"/>
<rect x="488.69" y="90.00" width="5.21" height="6.75" fill="rgb(197,197,197)"/>
<rect x="493.85" y="90.00" width="5.21" height="6.75" fill="rgb(196,196,196)"/>
<rect x="499.01" y="90.00" width="5.21" height="6.75" fill="rgb(217,217,217)"/>
<rect x="504.16" y="90.00" width="5.21" height="6.75" fill="rgb(215,215,215)"/>
<rect x="509.32" y="90.00" width="5.21" height="6.75" fill="rgb(196,196,196)"/>
<rect x="514.48" y="90.00" width="5.21" height="6.75" fill="rgb(191,191,191)"/>
<rect x="519.64" y="90.00" width="5.21" height="6.75" fill="rgb(213,213,213)"/>
<rect x="524.79" y="90.00" width="5.21" height="6.75" fill="rgb(204,204,204)"/>
<rect x="529.95" y="90.00" width="5.21" height="6.75" fill="rgb(194,194,194)"/>
<rect x="535.11" y="90.00" width="5.21" height="6.75" fill="rgb(190,190,190)"/>
<rect x="540.27" y="90.00" width="5.21" height="6.75" fill="rgb(219,219,219)"/>
<rect x="545.43" y="90.00" width="5.21" height="6.75" fill="rgb(187,187,187)"/>
<rect x="550.58" y="90.00" width="5.21" height="6.75" fill="rgb(210,210,210)"/>
<rect x="555.74" y="90.00" width="5.21" height="6.75" fill="rgb(233,233,233)"/>
<rect x="475.00" y="96.70" width="5.36" height="4.15" fill="rgb(242,242,242)"/>
<rect x="480.31" y="96.70" width="5.36" height="4.15" fill="rgb(243,243,243)"/>
<rect x="485.62" y="96.70" width="5.36" height="4.15" fill="rgb(241,241,241)"/>
<rect x="490.94" y="96.70" width="5.36" height="4.15" fill="rgb(242,242,242)"/>
<rect x="496.25" y="96.70" width="5.36" height="4.15" fill="rgb(234,234,234)"/>
<rect x="501.56" y="96.70" width="5.36" height="4.15" fill="rgb(241,241,241)"/>
<rect x="506.88" y="96.70" width="5.36" height="4.15" fill="rgb(232,232,232)"/>
<rect x="512.19" y="96.70" width="5.36" height="4.15" fill="rgb(245,245,245)"/>
<rect x="517.50" y="96.70" width="5.36" height="4.15" fill="rgb(240,240,240)"/>
<rect x="522.81" y="96.70" width="5.36" height="4.15" fill="rgb(233,233,233)"/>
<rect x="528.12" y="96.70" width="5.36" height="4.15" fill="rgb(232,232,232)"/>
<rect x="533.44" y="96.70" width="5.36" height="4.15" fill="rgb(232,232,232)"/>
<rect x="538.75" y="96.70" width="5.36" height="4.15" fill="rgb(235,235,235)"/>
<rect x="544.06" y="96.70" width="5.36" height="4.15" fill="rgb(246,246,246)"/>
<rect x="549.38" y="96.70" width="5.36" height="4.15" fill="rgb(235,235,235)"/>
<rect x="554.69" y="96.70" width="5.36" height="4.15" fill="rgb(241,241,241)"/>
<rect x="562.40" y="114.20" width="5.09" height="5.65" fill="rgb(206,206,206)"/>
<rect x="567.44" y="114.20" width="5.09" height="5.65" fill="rgb(214,214,214)"/>
<rect x="572.48" y="114.20" width="5.09" height="5.65" fill="rgb(205,205,205)"/>
<rect x="577.52" y="114.20" width="5.09" height="5.65" fill="rgb(213,213,213)"/>
<rect x="582.57" y="114.20" width="5.09" height="5.65" fill="rgb(197,197,197)"/>
<rect x="587.61" y="114.20" width="5.09" height="5.65" fill="rgb(218,218,218)"/>
<rect x="592.65" y="114.20" width="5.09" height="5.65" fill="rgb(199,199,199)"/>
<rect x="597.69" y="114.20" width="5.09" height="5.65" fill="rgb(203,203,203)"/>
<rect x="602.73" y="114.20" width="5.09" height="5.65" fill="rgb(216,216,216)"/>
<rect x="607.77" y="114.20" width="5.09" height="5.65" fill="rgb(185,185,185)"/>
<rect x="612.82" y="114.20" width="5.09" height="5.65" fill="rgb(190,190,190)"/>
<rect x="617.86" y="114.20" width="5.09" height="5.65" fill="rgb(234,234,234)"/>
<rect x="562.40" y="119.80" width="5.09" height="6.25" fill="rgb(236,236,236)"/>
<rect x="567.44" y="119.80" width="5.09" height="6.25" fill="rgb(241,241,241)"/>
<rect x="572.48" y="119.80" width="5.09" height="6.25" fill="rgb(245,245,245)"/>
<rect x="577.52" y="119.80" width="5.09" height="6.25" fill="rgb(230,230,230)"/>
<rect x="582.57" y="119.80" width="5.09" height="6.25" fill="rgb(236,236,236)"/>
<rect x="587.61" y="119.80" width="5.09" height="6.25" fill="rgb(238,238,238)"/>
<rect x="592.65" y="119.80" width="5.09" height="6.25" fill="rgb(235,235,235)"/>
<rect x="597.69" y="119.80" width="5.09" height="6.25" fill="rgb(244,244,244)"/>
<rect x="602.73" y="119.80" width="5.09" height="6.25" fill="rgb(237,237,237)"/>
<rect x="607.77" y="119.80" width="5.09" height="6.25" fill="rgb(228,228,228)"/>
<rect x="612.82" y="119.80" width="5.09" height="6.25" fill="rgb(230,230,230)"/>
<rect x="617.86" y="119.80" width="5.09" height="6.25" fill="rgb(246,246,246)"/>
</svg>
<div style="position:absolute;font-size:5.6px;line-height:8px;color:#2a2a2a;white-space:nowrap;-webkit-text-stroke-width:0.08px;left:462.9px;top:103.3px">设备状态：在用</div>
<div style="position:absolute;font-size:5.6px;line-height:8px;color:#2a2a2a;white-space:nowrap;-webkit-text-stroke-width:0.08px;left:462.9px;top:114.5px">所属区域：滨湖区</div>
<svg class="abs" style="left:462.4px;top:125.4px" width="8" height="8" viewBox="0 0 8 8"><circle cx="3.9" cy="3.9" r="3.1" fill="none" stroke="#333" stroke-width="0.6"/><path d="M3.8 2 L3.8 4.1 L5.1 4.9" fill="none" stroke="#333" stroke-width="0.55"/></svg>
<div style="position:absolute;font-size:5.6px;line-height:8px;color:#2a2a2a;white-space:nowrap;-webkit-text-stroke-width:0.08px;left:470px;top:125.3px">：2024-01-23 15:30:00</div>
<div style="position:absolute;font-size:5.6px;line-height:8px;color:#2a2a2a;white-space:nowrap;-webkit-text-stroke-width:0.08px;left:550.9px;top:103.3px">设备数量：1</div>
<svg class="abs" style="left:549.8px;top:114.3px" width="5" height="7" viewBox="0 0 5 7"><path d="M2.5 6.6 L0.9 3.8 Q0.2 2.4 0.9 1.3 Q1.6 0.4 2.5 0.4 Q3.4 0.4 4.1 1.3 Q4.8 2.4 4.1 3.8 Z" fill="#222"/><circle cx="2.5" cy="2.3" r="0.8" fill="#fff"/></svg>
<div style="position:absolute;font-size:5.6px;line-height:8px;color:#2a2a2a;white-space:nowrap;-webkit-text-stroke-width:0.08px;left:555.5px;top:114.5px">：</div>
<svg class="abs" style="left:549.8px;top:126px" width="5" height="5" viewBox="0 0 5 5"><path d="M0.6 1 Q0.6 0.3 1.3 0.3 L1.9 1.5 L1.4 2 Q2 3.2 3.1 3.7 L3.6 3.2 L4.8 3.8 Q4.8 4.6 4 4.7 Q1 4.4 0.6 1 Z" fill="#222"/></svg>
<div style="position:absolute;font-size:5.6px;line-height:8px;color:#2a2a2a;white-space:nowrap;-webkit-text-stroke-width:0.08px;left:555.5px;top:125.3px">：-</div>
<div class="abs" style="left:464.5px;top:138.3px;width:172.1px;height:135.4px;background:#eef2fb"></div>
<svg class="abs" style="left:0;top:0" width="810" height="540" viewBox="0 0 810 540"><rect x="464.8" y="138.6" width="171.5" height="134.8" fill="none" stroke="#dde3ef" stroke-width="0.6"/><line x1="464.5" y1="163.2" x2="636.6" y2="163.2" stroke="#dde3ef" stroke-width="0.6"/><line x1="464.5" y1="183.4" x2="636.6" y2="183.4" stroke="#dde3ef" stroke-width="0.6"/><line x1="464.5" y1="208.6" x2="636.6" y2="208.6" stroke="#dde3ef" stroke-width="0.6"/><line x1="464.5" y1="228.5" x2="636.6" y2="228.5" stroke="#dde3ef" stroke-width="0.6"/><line x1="464.5" y1="253.7" x2="521.8" y2="253.7" stroke="#dde3ef" stroke-width="0.6"/><line x1="521.8" y1="138.3" x2="521.8" y2="228.5" stroke="#dde3ef" stroke-width="0.6"/><line x1="579.0" y1="138.3" x2="579.0" y2="228.5" stroke="#dde3ef" stroke-width="0.6"/><line x1="521.8" y1="228.5" x2="521.8" y2="273.7" stroke="#dde3ef" stroke-width="0.6"/></svg>
<div style="position:absolute;width:56px;text-align:center;font-size:5.6px;line-height:8px;color:#7a7a7a;white-space:nowrap;-webkit-text-stroke-width:0.15px;left:465.15px;top:144.40px">COD</div>
<div style="position:absolute;width:56px;text-align:center;font-size:5.6px;line-height:8px;color:#7a7a7a;white-space:nowrap;-webkit-text-stroke-width:0.15px;left:465.15px;top:153.30px">(mg/l)</div>
<div style="position:absolute;width:56px;text-align:center;font-size:5.6px;line-height:8px;color:#7a7a7a;white-space:nowrap;-webkit-text-stroke-width:0.15px;left:522.40px;top:144.40px">氨氮</div>
<div style="position:absolute;width:56px;text-align:center;font-size:5.6px;line-height:8px;color:#7a7a7a;white-space:nowrap;-webkit-text-stroke-width:0.15px;left:522.40px;top:153.30px">(mg/l)</div>
<div style="position:absolute;width:56px;text-align:center;font-size:5.6px;line-height:8px;color:#7a7a7a;white-space:nowrap;-webkit-text-stroke-width:0.15px;left:579.80px;top:144.40px">总磷</div>
<div style="position:absolute;width:56px;text-align:center;font-size:5.6px;line-height:8px;color:#7a7a7a;white-space:nowrap;-webkit-text-stroke-width:0.15px;left:579.80px;top:153.30px">(mg/l)</div>
<div style="position:absolute;width:56px;text-align:center;font-size:5.6px;line-height:8px;color:#7a7a7a;white-space:nowrap;-webkit-text-stroke-width:0.15px;left:465.15px;top:189.20px">总氮</div>
<div style="position:absolute;width:56px;text-align:center;font-size:5.6px;line-height:8px;color:#7a7a7a;white-space:nowrap;-webkit-text-stroke-width:0.15px;left:465.15px;top:198.10px">(mg/l)</div>
<div style="position:absolute;width:56px;text-align:center;font-size:5.6px;line-height:8px;color:#7a7a7a;white-space:nowrap;-webkit-text-stroke-width:0.15px;left:522.40px;top:189.20px">PH</div>
<div style="position:absolute;width:56px;text-align:center;font-size:5.6px;line-height:8px;color:#7a7a7a;white-space:nowrap;-webkit-text-stroke-width:0.15px;left:522.40px;top:198.10px">(无量纲)</div>
<div style="position:absolute;width:56px;text-align:center;font-size:5.6px;line-height:8px;color:#7a7a7a;white-space:nowrap;-webkit-text-stroke-width:0.15px;left:579.80px;top:189.20px">流量</div>
<div style="position:absolute;width:56px;text-align:center;font-size:5.6px;line-height:8px;color:#7a7a7a;white-space:nowrap;-webkit-text-stroke-width:0.15px;left:579.80px;top:198.10px">(m³/h)</div>
<div style="position:absolute;width:56px;text-align:center;font-size:5.6px;line-height:8px;color:#7a7a7a;white-space:nowrap;-webkit-text-stroke-width:0.15px;left:465.15px;top:234.30px">累计流量</div>
<div style="position:absolute;width:56px;text-align:center;font-size:5.6px;line-height:8px;color:#7a7a7a;white-space:nowrap;-webkit-text-stroke-width:0.15px;left:465.15px;top:243.20px">(m³)</div>
<div style="position:absolute;width:56px;text-align:center;font-size:5.5px;line-height:8px;color:#1a1a1a;white-space:nowrap;-webkit-text-stroke-width:0.1px;left:465.15px;top:169.30px"><b>22.994</b> <span style="color:#555">(250)</span></div>
<div style="position:absolute;width:56px;text-align:center;font-size:5.5px;line-height:8px;color:#1a1a1a;white-space:nowrap;-webkit-text-stroke-width:0.1px;left:522.40px;top:169.30px"><b>2.743</b> <span style="color:#555">(45)</span></div>
<div style="position:absolute;width:56px;text-align:center;font-size:5.5px;line-height:8px;color:#1a1a1a;white-space:nowrap;-webkit-text-stroke-width:0.1px;left:579.80px;top:169.30px">-</div>
<div style="position:absolute;width:56px;text-align:center;font-size:5.5px;line-height:8px;color:#1a1a1a;white-space:nowrap;-webkit-text-stroke-width:0.1px;left:465.15px;top:214.10px">-</div>
<div style="position:absolute;width:56px;text-align:center;font-size:5.5px;line-height:8px;color:#1a1a1a;white-space:nowrap;-webkit-text-stroke-width:0.1px;left:522.40px;top:214.10px"><b>6.89</b></div>
<div style="position:absolute;width:56px;text-align:center;font-size:5.5px;line-height:8px;color:#1a1a1a;white-space:nowrap;-webkit-text-stroke-width:0.1px;left:579.80px;top:214.10px"><b>0.53</b></div>
<div style="position:absolute;width:56px;text-align:center;font-size:5.5px;line-height:8px;color:#1a1a1a;white-space:nowrap;-webkit-text-stroke-width:0.1px;left:465.15px;top:259.50px">-</div>
<!--/POPUP-->
<!-- bottom panel -->
<div class="panel" style="left:109.4px;top:338.7px;width:687.9px;height:133.5px">
  <div class="ph" style="height:17.1px"><span style="line-height:17.1px">实时监测</span></div>
</div>
<!--TABLE-->
<div class="abs" style="left:109.4px;top:355.8px;width:683.5px;height:28.6px;background:#f2f2f2"></div>
<div class="th" style="left:96.28px;top:366.9px">状态</div>
<div class="th" style="left:144.79px;top:366.9px">企业名称</div>
<div class="th" style="left:208.63px;top:366.9px">站点</div>
<div class="th" style="left:273.48px;top:360.9px">COD</div>
<div class="th" style="left:273.48px;top:372.5px">(mg/l)</div>
<div class="th" style="left:338.78px;top:360.9px">氨氮</div>
<div class="th" style="left:338.78px;top:372.5px">(mg/l)</div>
<div class="th" style="left:404.08px;top:360.9px">总磷</div>
<div class="th" style="left:404.08px;top:372.5px">(mg/l)</div>
<div class="th" style="left:469.38px;top:360.9px">总氮</div>
<div class="th" style="left:469.38px;top:372.5px">(mg/l)</div>
<div class="th" style="left:534.68px;top:360.9px">PH</div>
<div class="th" style="left:534.68px;top:372.5px">(无量纲)</div>
<div class="th" style="left:599.98px;top:360.9px">流量</div>
<div class="th" style="left:599.98px;top:372.5px">(m³/h)</div>
<div class="th" style="left:665.28px;top:360.9px">累计流量</div>
<div class="th" style="left:665.28px;top:372.5px">(m³)</div>
<div class="th" style="left:730.58px;top:366.9px">监测时间</div>
<div class="abs" style="left:109.4px;top:413.80px;width:683.5px;height:0.7px;background:#ebeef5"></div>
<div class="abs" style="left:121.18px;top:394.20px;width:10.4px;height:10.6px;border-radius:50%;background:#b9e6a3"></div>
<div class="abs" style="left:122.48px;top:395.50px;width:7.6px;height:7.8px;border-radius:50%;background:#62c434"></div>
<div class="td" style="left:273.48px;top:396.20px">65.437</div>
<div class="td" style="left:338.78px;top:396.20px">12.731</div>
<div class="td" style="left:404.08px;top:396.20px">-</div>
<div class="td" style="left:469.38px;top:396.20px">-</div>
<div class="td" style="left:534.68px;top:396.20px">8.045</div>
<div class="td" style="left:599.98px;top:396.20px">7.155</div>
<div class="td" style="left:665.28px;top:396.20px">327636.531</div>
<div class="td" style="left:730.58px;top:396.20px">2024-01-23 15:33:00</div>
<div class="abs" style="left:109.4px;top:436.10px;width:683.5px;height:0.7px;background:#ebeef5"></div>
<div class="abs" style="left:121.18px;top:420.35px;width:10.4px;height:10.6px;border-radius:50%;background:#b9e6a3"></div>
<div class="abs" style="left:122.48px;top:421.65px;width:7.6px;height:7.8px;border-radius:50%;background:#62c434"></div>
<div class="td" style="left:273.48px;top:422.35px">22.994</div>
<div class="td" style="left:338.78px;top:422.35px">2.743</div>
<div class="td" style="left:404.08px;top:422.35px">-</div>
<div class="td" style="left:469.38px;top:422.35px">-</div>
<div class="td" style="left:534.68px;top:422.35px">6.89</div>
<div class="td" style="left:599.98px;top:422.35px">0.53</div>
<div class="td" style="left:665.28px;top:422.35px">-</div>
<div class="td" style="left:730.58px;top:422.35px">2024-01-23 15:30:00</div>
<div class="abs" style="left:109.4px;top:462.70px;width:683.5px;height:0.7px;background:#ebeef5"></div>
<div class="abs" style="left:121.18px;top:444.80px;width:10.4px;height:10.6px;border-radius:50%;background:#b9e6a3"></div>
<div class="abs" style="left:122.48px;top:446.10px;width:7.6px;height:7.8px;border-radius:50%;background:#62c434"></div>
<div class="td" style="left:273.48px;top:446.80px">41.933</div>
<div class="td" style="left:338.78px;top:446.80px">3.593</div>
<div class="td" style="left:404.08px;top:446.80px">-</div>
<div class="td" style="left:469.38px;top:446.80px">-</div>
<div class="td" style="left:534.68px;top:446.80px">8.135</div>
<div class="td" style="left:599.98px;top:446.80px">0</div>
<div class="td" style="left:665.28px;top:446.80px">13467</div>
<div class="td" style="left:730.58px;top:446.80px">2024-01-23 15:30:00</div>
<svg class="abs" style="left:0;top:0" width="810" height="540" viewBox="0 0 810 540">
<rect x="147.20" y="390.60" width="4.67" height="5.85" fill="rgb(220,220,220)"/>
<rect x="151.82" y="390.60" width="4.67" height="5.85" fill="rgb(194,194,194)"/>
<rect x="156.43" y="390.60" width="4.67" height="5.85" fill="rgb(202,202,202)"/>
<rect x="161.05" y="390.60" width="4.67" height="5.85" fill="rgb(210,210,210)"/>
<rect x="165.67" y="390.60" width="4.67" height="5.85" fill="rgb(191,191,191)"/>
<rect x="170.28" y="390.60" width="4.67" height="5.85" fill="rgb(192,192,192)"/>
<rect x="174.90" y="390.60" width="4.67" height="5.85" fill="rgb(207,207,207)"/>
<rect x="179.52" y="390.60" width="4.67" height="5.85" fill="rgb(193,193,193)"/>
<rect x="184.13" y="390.60" width="4.67" height="5.85" fill="rgb(201,201,201)"/>
<rect x="188.75" y="390.60" width="4.67" height="5.85" fill="rgb(208,208,208)"/>
<rect x="193.37" y="390.60" width="4.67" height="5.85" fill="rgb(191,191,191)"/>
<rect x="197.98" y="390.60" width="4.67" height="5.85" fill="rgb(226,226,226)"/>
<rect x="150.00" y="396.60" width="4.60" height="4.05" fill="rgb(235,235,235)"/>
<rect x="154.55" y="396.60" width="4.60" height="4.05" fill="rgb(232,232,232)"/>
<rect x="159.09" y="396.60" width="4.60" height="4.05" fill="rgb(233,233,233)"/>
<rect x="163.64" y="396.60" width="4.60" height="4.05" fill="rgb(238,238,238)"/>
<rect x="168.18" y="396.60" width="4.60" height="4.05" fill="rgb(238,238,238)"/>
<rect x="172.73" y="396.60" width="4.60" height="4.05" fill="rgb(233,233,233)"/>
<rect x="177.27" y="396.60" width="4.60" height="4.05" fill="rgb(235,235,235)"/>
<rect x="181.82" y="396.60" width="4.60" height="4.05" fill="rgb(233,233,233)"/>
<rect x="186.36" y="396.60" width="4.60" height="4.05" fill="rgb(240,240,240)"/>
<rect x="190.91" y="396.60" width="4.60" height="4.05" fill="rgb(238,238,238)"/>
<rect x="195.45" y="396.60" width="4.60" height="4.05" fill="rgb(232,232,232)"/>
<rect x="162.20" y="401.90" width="4.99" height="6.25" fill="rgb(228,228,228)"/>
<rect x="167.14" y="401.90" width="4.99" height="6.25" fill="rgb(193,193,193)"/>
<rect x="172.08" y="401.90" width="4.99" height="6.25" fill="rgb(197,197,197)"/>
<rect x="177.02" y="401.90" width="4.99" height="6.25" fill="rgb(210,210,210)"/>
<rect x="181.96" y="401.90" width="4.99" height="6.25" fill="rgb(230,230,230)"/>
<rect x="217.80" y="396.00" width="4.97" height="6.25" fill="rgb(233,233,233)"/>
<rect x="222.73" y="396.00" width="4.97" height="6.25" fill="rgb(196,196,196)"/>
<rect x="227.65" y="396.00" width="4.97" height="6.25" fill="rgb(213,213,213)"/>
<rect x="232.58" y="396.00" width="4.97" height="6.25" fill="rgb(213,213,213)"/>
<rect x="237.50" y="396.00" width="4.97" height="6.25" fill="rgb(207,207,207)"/>
<rect x="242.43" y="396.00" width="4.97" height="6.25" fill="rgb(196,196,196)"/>
<rect x="247.35" y="396.00" width="4.97" height="6.25" fill="rgb(202,202,202)"/>
<rect x="252.28" y="396.00" width="4.97" height="6.25" fill="rgb(216,216,216)"/>
<rect x="220.00" y="402.30" width="4.55" height="3.05" fill="rgb(243,243,243)"/>
<rect x="224.50" y="402.30" width="4.55" height="3.05" fill="rgb(237,237,237)"/>
<rect x="229.00" y="402.30" width="4.55" height="3.05" fill="rgb(239,239,239)"/>
<rect x="233.50" y="402.30" width="4.55" height="3.05" fill="rgb(241,241,241)"/>
<rect x="238.00" y="402.30" width="4.55" height="3.05" fill="rgb(237,237,237)"/>
<rect x="242.50" y="402.30" width="4.55" height="3.05" fill="rgb(243,243,243)"/>
<rect x="247.00" y="402.30" width="4.55" height="3.05" fill="rgb(236,236,236)"/>
<rect x="251.50" y="402.30" width="4.55" height="3.05" fill="rgb(244,244,244)"/>
<rect x="156.50" y="420.20" width="4.49" height="5.65" fill="rgb(229,229,229)"/>
<rect x="160.94" y="420.20" width="4.49" height="5.65" fill="rgb(217,217,217)"/>
<rect x="165.39" y="420.20" width="4.49" height="5.65" fill="rgb(226,226,226)"/>
<rect x="169.83" y="420.20" width="4.49" height="5.65" fill="rgb(221,221,221)"/>
<rect x="174.28" y="420.20" width="4.49" height="5.65" fill="rgb(205,205,205)"/>
<rect x="178.72" y="420.20" width="4.49" height="5.65" fill="rgb(203,203,203)"/>
<rect x="183.17" y="420.20" width="4.49" height="5.65" fill="rgb(218,218,218)"/>
<rect x="187.61" y="420.20" width="4.49" height="5.65" fill="rgb(218,218,218)"/>
<rect x="192.06" y="420.20" width="4.49" height="5.65" fill="rgb(240,240,240)"/>
<rect x="156.50" y="425.80" width="4.49" height="5.65" fill="rgb(226,226,226)"/>
<rect x="160.94" y="425.80" width="4.49" height="5.65" fill="rgb(211,211,211)"/>
<rect x="165.39" y="425.80" width="4.49" height="5.65" fill="rgb(203,203,203)"/>
<rect x="169.83" y="425.80" width="4.49" height="5.65" fill="rgb(217,217,217)"/>
<rect x="174.28" y="425.80" width="4.49" height="5.65" fill="rgb(222,222,222)"/>
<rect x="178.72" y="425.80" width="4.49" height="5.65" fill="rgb(202,202,202)"/>
<rect x="183.17" y="425.80" width="4.49" height="5.65" fill="rgb(218,218,218)"/>
<rect x="187.61" y="425.80" width="4.49" height="5.65" fill="rgb(201,201,201)"/>
<rect x="192.06" y="425.80" width="4.49" height="5.65" fill="rgb(239,239,239)"/>
<rect x="210.50" y="420.20" width="4.82" height="5.65" fill="rgb(226,226,226)"/>
<rect x="215.27" y="420.20" width="4.82" height="5.65" fill="rgb(215,215,215)"/>
<rect x="220.03" y="420.20" width="4.82" height="5.65" fill="rgb(221,221,221)"/>
<rect x="224.80" y="420.20" width="4.82" height="5.65" fill="rgb(217,217,217)"/>
<rect x="229.57" y="420.20" width="4.82" height="5.65" fill="rgb(213,213,213)"/>
<rect x="234.33" y="420.20" width="4.82" height="5.65" fill="rgb(224,224,224)"/>
<rect x="239.10" y="420.20" width="4.82" height="5.65" fill="rgb(210,210,210)"/>
<rect x="243.87" y="420.20" width="4.82" height="5.65" fill="rgb(214,214,214)"/>
<rect x="248.63" y="420.20" width="4.82" height="5.65" fill="rgb(218,218,218)"/>
<rect x="253.40" y="420.20" width="4.82" height="5.65" fill="rgb(229,229,229)"/>
<rect x="258.17" y="420.20" width="4.82" height="5.65" fill="rgb(214,214,214)"/>
<rect x="262.93" y="420.20" width="4.82" height="5.65" fill="rgb(231,231,231)"/>
<rect x="210.50" y="425.80" width="4.82" height="5.65" fill="rgb(229,229,229)"/>
<rect x="215.27" y="425.80" width="4.82" height="5.65" fill="rgb(207,207,207)"/>
<rect x="220.03" y="425.80" width="4.82" height="5.65" fill="rgb(225,225,225)"/>
<rect x="224.80" y="425.80" width="4.82" height="5.65" fill="rgb(205,205,205)"/>
<rect x="229.57" y="425.80" width="4.82" height="5.65" fill="rgb(222,222,222)"/>
<rect x="234.33" y="425.80" width="4.82" height="5.65" fill="rgb(224,224,224)"/>
<rect x="239.10" y="425.80" width="4.82" height="5.65" fill="rgb(207,207,207)"/>
<rect x="243.87" y="425.80" width="4.82" height="5.65" fill="rgb(202,202,202)"/>
<rect x="248.63" y="425.80" width="4.82" height="5.65" fill="rgb(218,218,218)"/>
<rect x="253.40" y="425.80" width="4.82" height="5.65" fill="rgb(209,209,209)"/>
<rect x="258.17" y="425.80" width="4.82" height="5.65" fill="rgb(216,216,216)"/>
<rect x="262.93" y="425.80" width="4.82" height="5.65" fill="rgb(235,235,235)"/>
<rect x="147.20" y="443.60" width="4.67" height="6.25" fill="rgb(220,220,220)"/>
<rect x="151.82" y="443.60" width="4.67" height="6.25" fill="rgb(213,213,213)"/>
<rect x="156.43" y="443.60" width="4.67" height="6.25" fill="rgb(204,204,204)"/>
<rect x="161.05" y="443.60" width="4.67" height="6.25" fill="rgb(199,199,199)"/>
<rect x="165.67" y="443.60" width="4.67" height="6.25" fill="rgb(209,209,209)"/>
<rect x="170.28" y="443.60" width="4.67" height="6.25" fill="rgb(192,192,192)"/>
<rect x="174.90" y="443.60" width="4.67" height="6.25" fill="rgb(193,193,193)"/>
<rect x="179.52" y="443.60" width="4.67" height="6.25" fill="rgb(206,206,206)"/>
<rect x="184.13" y="443.60" width="4.67" height="6.25" fill="rgb(203,203,203)"/>
<rect x="188.75" y="443.60" width="4.67" height="6.25" fill="rgb(195,195,195)"/>
<rect x="193.37" y="443.60" width="4.67" height="6.25" fill="rgb(214,214,214)"/>
<rect x="197.98" y="443.60" width="4.67" height="6.25" fill="rgb(220,220,220)"/>
<rect x="150.00" y="441.40" width="4.60" height="2.25" fill="rgb(237,237,237)"/>
<rect x="154.55" y="441.40" width="4.60" height="2.25" fill="rgb(242,242,242)"/>
<rect x="159.09" y="441.40" width="4.60" height="2.25" fill="rgb(241,241,241)"/>
<rect x="163.64" y="441.40" width="4.60" height="2.25" fill="rgb(235,235,235)"/>
<rect x="168.18" y="441.40" width="4.60" height="2.25" fill="rgb(245,245,245)"/>
<rect x="172.73" y="441.40" width="4.60" height="2.25" fill="rgb(236,236,236)"/>
<rect x="177.27" y="441.40" width="4.60" height="2.25" fill="rgb(243,243,243)"/>
<rect x="181.82" y="441.40" width="4.60" height="2.25" fill="rgb(244,244,244)"/>
<rect x="186.36" y="441.40" width="4.60" height="2.25" fill="rgb(240,240,240)"/>
<rect x="190.91" y="441.40" width="4.60" height="2.25" fill="rgb(240,240,240)"/>
<rect x="195.45" y="441.40" width="4.60" height="2.25" fill="rgb(240,240,240)"/>
<rect x="162.20" y="451.00" width="4.99" height="5.45" fill="rgb(239,239,239)"/>
<rect x="167.14" y="451.00" width="4.99" height="5.45" fill="rgb(215,215,215)"/>
<rect x="172.08" y="451.00" width="4.99" height="5.45" fill="rgb(218,218,218)"/>
<rect x="177.02" y="451.00" width="4.99" height="5.45" fill="rgb(225,225,225)"/>
<rect x="181.96" y="451.00" width="4.99" height="5.45" fill="rgb(234,234,234)"/>
<rect x="162.20" y="456.40" width="4.99" height="5.45" fill="rgb(222,222,222)"/>
<rect x="167.14" y="456.40" width="4.99" height="5.45" fill="rgb(202,202,202)"/>
<rect x="172.08" y="456.40" width="4.99" height="5.45" fill="rgb(208,208,208)"/>
<rect x="177.02" y="456.40" width="4.99" height="5.45" fill="rgb(215,215,215)"/>
<rect x="181.96" y="456.40" width="4.99" height="5.45" fill="rgb(240,240,240)"/>
<rect x="218.00" y="445.50" width="4.49" height="5.65" fill="rgb(240,240,240)"/>
<rect x="222.44" y="445.50" width="4.49" height="5.65" fill="rgb(207,207,207)"/>
<rect x="226.89" y="445.50" width="4.49" height="5.65" fill="rgb(206,206,206)"/>
<rect x="231.33" y="445.50" width="4.49" height="5.65" fill="rgb(228,228,228)"/>
<rect x="235.78" y="445.50" width="4.49" height="5.65" fill="rgb(227,227,227)"/>
<rect x="240.22" y="445.50" width="4.49" height="5.65" fill="rgb(214,214,214)"/>
<rect x="244.67" y="445.50" width="4.49" height="5.65" fill="rgb(225,225,225)"/>
<rect x="249.11" y="445.50" width="4.49" height="5.65" fill="rgb(223,223,223)"/>
<rect x="253.56" y="445.50" width="4.49" height="5.65" fill="rgb(240,240,240)"/>
<rect x="218.00" y="451.10" width="4.49" height="5.65" fill="rgb(240,240,240)"/>
<rect x="222.44" y="451.10" width="4.49" height="5.65" fill="rgb(219,219,219)"/>
<rect x="226.89" y="451.10" width="4.49" height="5.65" fill="rgb(214,214,214)"/>
<rect x="231.33" y="451.10" width="4.49" height="5.65" fill="rgb(227,227,227)"/>
<rect x="235.78" y="451.10" width="4.49" height="5.65" fill="rgb(217,217,217)"/>
<rect x="240.22" y="451.10" width="4.49" height="5.65" fill="rgb(226,226,226)"/>
<rect x="244.67" y="451.10" width="4.49" height="5.65" fill="rgb(216,216,216)"/>
<rect x="249.11" y="451.10" width="4.49" height="5.65" fill="rgb(205,205,205)"/>
<rect x="253.56" y="451.10" width="4.49" height="5.65" fill="rgb(239,239,239)"/>
</svg>
<div class="abs" style="left:793.4px;top:385px;width:3.6px;height:46.8px;background:#dcdcdc;border-radius:2px"></div>
<!--/TABLE-->
</body></html>
